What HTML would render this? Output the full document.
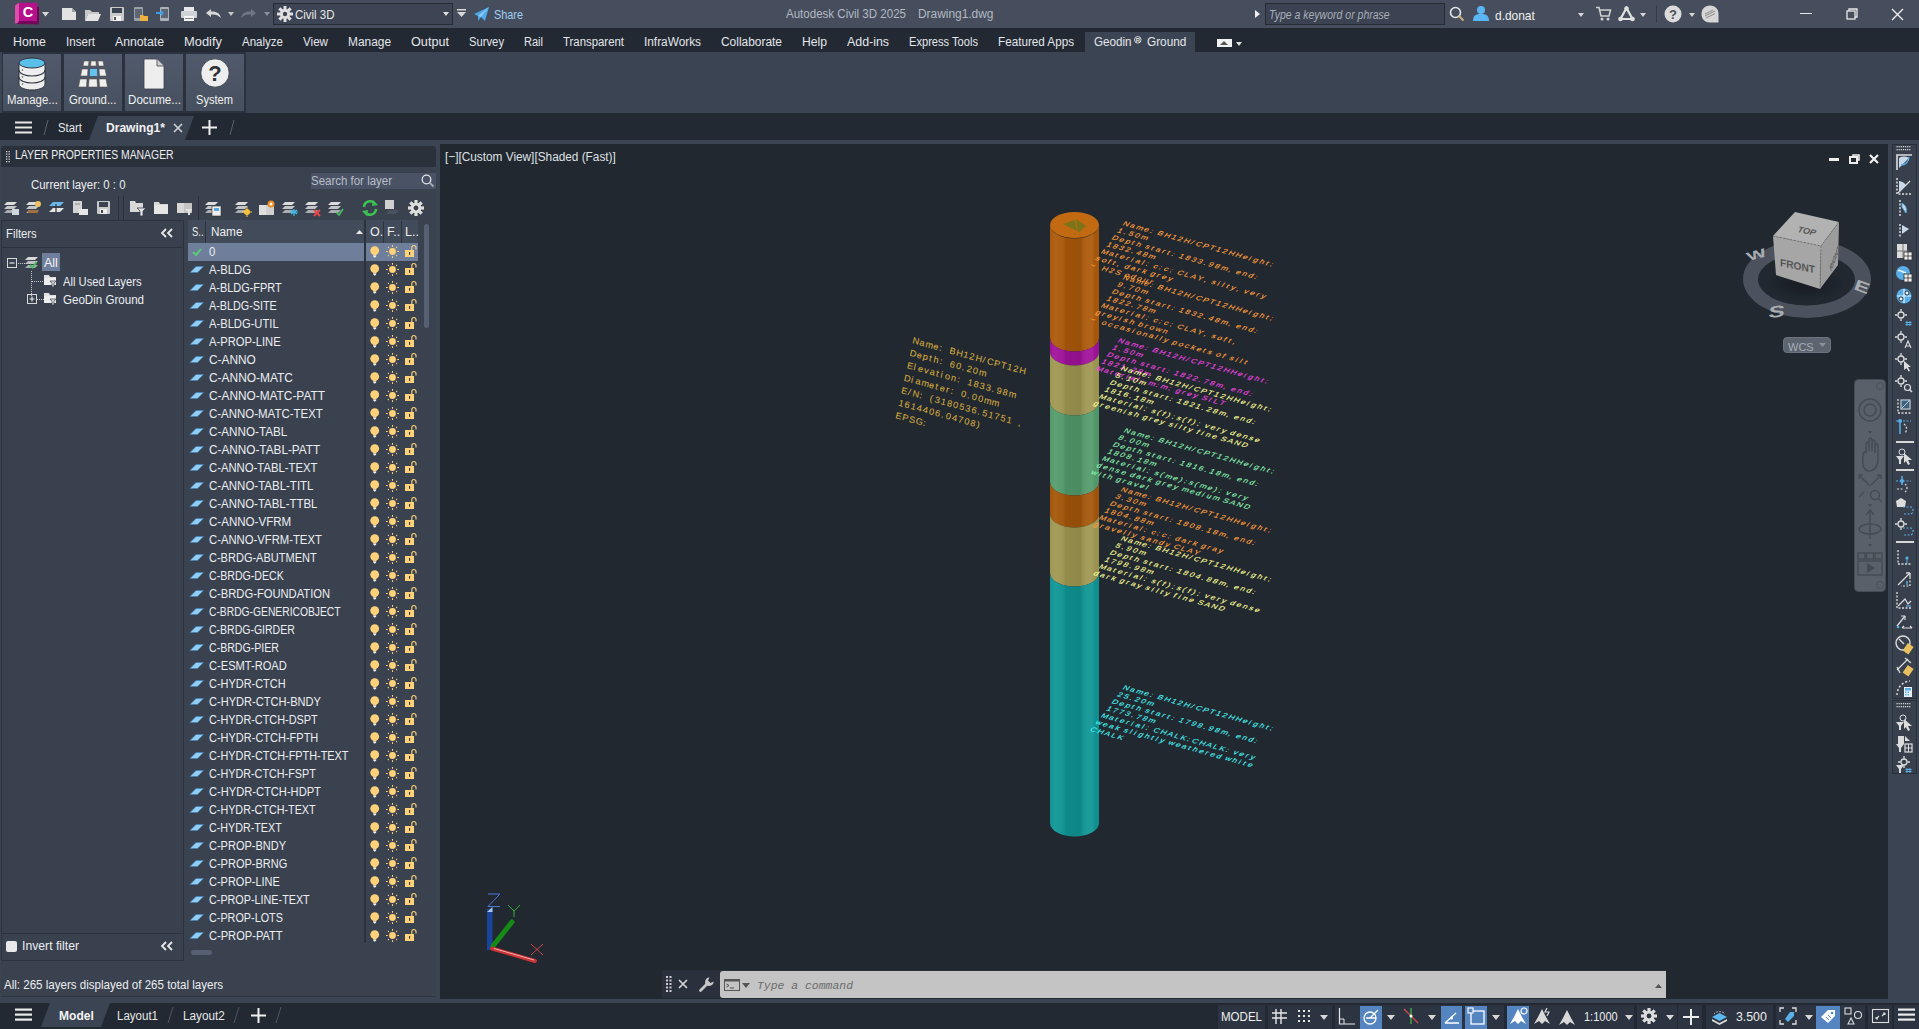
<!DOCTYPE html>
<html><head><meta charset="utf-8"><title>Autodesk Civil 3D 2025</title><style>
*{margin:0;padding:0;box-sizing:border-box}
html,body{width:1919px;height:1029px;overflow:hidden}
body{position:relative;background:#3b4453;font-family:"Liberation Sans",sans-serif;font-size:12px;color:#e8e8e8}
.a{position:absolute}
.t{position:absolute;white-space:nowrap}
svg{overflow:visible}
</style></head><body>
<div class="a" style="left:0px;top:0px;width:1919px;height:28px;background:#464e5d;"></div>
<svg class="a" style="left:14px;top:2px;" width="26" height="24" viewBox="0 0 26 24">
      <polygon points="1,3.5 5,0.7 5,21 1,21.5" fill="#e24aac"/>
      <rect x="5" y="0.7" width="18" height="18.3" fill="#b5118a"/>
      <polygon points="23,4.8 25,4.8 25,22.5 23,19" fill="#70064f"/>
      <polygon points="3,22 5,19 23,19 25,22.5 25,22.5" fill="#74075a"/>
      <text x="14" y="15.2" font-family="Liberation Sans" font-weight="bold" font-size="14.5" fill="#fff" text-anchor="middle">C</text>
    </svg>
<svg class="a" style="left:42px;top:12px;" width="7" height="4.5" viewBox="0 0 7 4.5"><polygon points="0,0 7,0 3.5,4.5" fill="#d8d8d8"/></svg>
<svg class="a" style="left:61px;top:7px;" width="16" height="14" viewBox="0 0 16 14"><polygon points="1,1 11,1 15,5 15,13 1,13" fill="#e2e2e2"/><polygon points="11,1 15,5 11,5" fill="#9aa0a8"/></svg>
<svg class="a" style="left:84px;top:8px;" width="18" height="14" viewBox="0 0 18 14"><polygon points="1,2 6,2 8,4 15,4 15,6 4,6 1,13" fill="#c8c8c8"/><polygon points="4,6 17,6 14,13 1,13" fill="#e4e4e4"/></svg>
<svg class="a" style="left:109px;top:6px;" width="16" height="16" viewBox="0 0 16 16"><rect x="1" y="1" width="14" height="14" rx="1" fill="#c9c9c9"/><rect x="3" y="2" width="10" height="5" fill="#3b4453"/><rect x="4" y="10" width="8" height="5" fill="#f4f4f4"/><rect x="5" y="11" width="2" height="3" fill="#555"/></svg>
<svg class="a" style="left:133px;top:6px;" width="16" height="16" viewBox="0 0 16 16"><rect x="1" y="1" width="9" height="14" rx="1" fill="#9aa0a8"/><rect x="2" y="3" width="7" height="9" fill="#5d6573"/><polygon points="7,9 10,9 11,10 15,10 15,15 7,15" fill="#f0b040"/></svg>
<svg class="a" style="left:156px;top:6px;" width="14" height="16" viewBox="0 0 14 16"><rect x="4" y="1" width="9" height="14" rx="1" fill="#aab0b8"/><rect x="5" y="3" width="7" height="9" fill="#5d6573"/><polygon points="0,6 5,6 5,4 8,7 5,10 5,8 0,8" fill="#39a0e8"/></svg>
<svg class="a" style="left:180px;top:6px;" width="18" height="16" viewBox="0 0 18 16"><rect x="4" y="1" width="10" height="4" fill="#e8e8e8"/><rect x="1" y="5" width="16" height="7" rx="1" fill="#d0d4d8"/><rect x="4" y="10" width="10" height="5" fill="#f4f4f4"/><rect x="5" y="12" width="8" height="1" fill="#888"/></svg>
<svg class="a" style="left:205px;top:8px;" width="17" height="11" viewBox="0 0 17 11"><path d="M6,1 L1,5 L6,9 L6,6.5 C10,6 13,7 16,10 C15,5 11,3 6,3.5 Z" fill="#d8d8d8"/></svg>
<svg class="a" style="left:228px;top:12px;" width="6" height="4" viewBox="0 0 6 4"><polygon points="0,0 6,0 3,4" fill="#c8c8c8"/></svg>
<svg class="a" style="left:241px;top:8px;" width="16" height="11" viewBox="0 0 16 11"><path d="M10,1 L15,5 L10,9 L10,6.5 C6,6 3,7 0,10 C1,5 5,3 10,3.5 Z" fill="#6e7683"/></svg>
<svg class="a" style="left:264px;top:12px;" width="6" height="4" viewBox="0 0 6 4"><polygon points="0,0 6,0 3,4" fill="#8a919c"/></svg>
<div class="a" style="left:273px;top:3px;width:180px;height:22px;background:#3d4554;border:1px solid #262c36;"></div>
<svg class="a" style="left:277px;top:6px;" width="16" height="16" viewBox="0 0 16 16"><g fill="#e0e0e0"><circle cx="8" cy="8" r="5"/>
      <rect x="6.5" y="0" width="3" height="16"/><rect x="0" y="6.5" width="16" height="3"/>
      <rect x="6.5" y="0" width="3" height="16" transform="rotate(45 8 8)"/><rect x="6.5" y="0" width="3" height="16" transform="rotate(-45 8 8)"/></g>
      <circle cx="8" cy="8" r="2.2" fill="#3d4554"/></svg>
<div class="t" style="left:295.00px;top:8.23px;font-size:13px;line-height:14.52px;color:#e8e8e8;transform:scaleX(0.8820);transform-origin:0 0;">Civil 3D</div>
<svg class="a" style="left:443px;top:12px;" width="6" height="4" viewBox="0 0 6 4"><polygon points="0,0 6,0 3,4" fill="#e0e0e0"/></svg>
<svg class="a" style="left:457px;top:9px;" width="9" height="9" viewBox="0 0 9 9"><rect x="0" y="0" width="9" height="1.5" fill="#d8d8d8"/><polygon points="0,3 9,3 4.5,8" fill="#d8d8d8"/></svg>
<svg class="a" style="left:474px;top:7px;" width="16" height="15" viewBox="0 0 16 15"><polygon points="0,7 15,0 11,14 7,10 4,14 4,9" fill="#4fa9ea"/><polygon points="4,9 15,0 7,10" fill="#8ccaf4"/></svg>
<div class="t" style="left:494.00px;top:8.69px;font-size:12.5px;line-height:13.96px;color:#9fcff2;transform:scaleX(0.8695);transform-origin:0 0;">Share</div>
<div class="t" style="left:786.00px;top:8.19px;font-size:12.5px;line-height:13.96px;color:#b3b9c2;transform:scaleX(0.9236);transform-origin:0 0;">Autodesk Civil 3D 2025</div>
<div class="t" style="left:918.00px;top:8.19px;font-size:12.5px;line-height:13.96px;color:#b3b9c2;transform:scaleX(0.9520);transform-origin:0 0;">Drawing1.dwg</div>
<svg class="a" style="left:1255px;top:10px;" width="5" height="8" viewBox="0 0 5 8"><polygon points="0,0 5,4 0,8" fill="#f0f0f0"/></svg>
<div class="a" style="left:1265px;top:3px;width:180px;height:22px;background:#3b4352;border:1px solid #262c36;"></div>
<div class="t" style="left:1268.80px;top:8.64px;font-size:12px;line-height:13.40px;color:#a7aeb9;font-style:italic;transform:scaleX(0.8757);transform-origin:0 0;">Type a keyword or phrase</div>
<svg class="a" style="left:1449px;top:6px;" width="16" height="16" viewBox="0 0 16 16"><circle cx="6.5" cy="6.5" r="5" fill="none" stroke="#e6e6e6" stroke-width="1.6"/><line x1="10" y1="10" x2="14.5" y2="14.5" stroke="#c9b07a" stroke-width="2"/></svg>
<svg class="a" style="left:1472px;top:5px;" width="18" height="16" viewBox="0 0 18 16"><circle cx="9" cy="5" r="4" fill="#5ab6f2"/><path d="M1,16 C1,10 4,9 9,9 C14,9 17,10 17,16 Z" fill="#5ab6f2"/></svg>
<div class="t" style="left:1494.60px;top:8.73px;font-size:13px;line-height:14.52px;color:#f0f0f0;transform:scaleX(0.9177);transform-origin:0 0;">d.donat</div>
<svg class="a" style="left:1578px;top:13px;" width="6" height="4" viewBox="0 0 6 4"><polygon points="0,0 6,0 3,4" fill="#d8d8d8"/></svg>
<svg class="a" style="left:1596px;top:6px;" width="15" height="15" viewBox="0 0 15 15"><path d="M0,1.5 L3,1.5 L5,10 L13,10 L14.5,4 L4,4" fill="none" stroke="#d0d0d0" stroke-width="1.5"/><circle cx="6" cy="13" r="1.5" fill="#d0d0d0"/><circle cx="12" cy="13" r="1.5" fill="#d0d0d0"/></svg>
<svg class="a" style="left:1618px;top:6px;" width="17" height="16" viewBox="0 0 17 16"><path d="M8.5,2 L2.5,13 L14.5,13 Z" fill="none" stroke="#e0e0e0" stroke-width="2.2"/><circle cx="8.5" cy="2.5" r="2.3" fill="#e0e0e0"/><circle cx="2.5" cy="13" r="2.3" fill="#e0e0e0"/><circle cx="14.5" cy="13" r="2.3" fill="#e0e0e0"/></svg>
<svg class="a" style="left:1640px;top:13px;" width="6" height="4" viewBox="0 0 6 4"><polygon points="0,0 6,0 3,4" fill="#d8d8d8"/></svg>
<div class="a" style="left:1656px;top:5px;width:1px;height:18px;background:#353c48;"></div>
<svg class="a" style="left:1664px;top:5px;" width="18" height="18" viewBox="0 0 18 18"><circle cx="9" cy="9" r="8.5" fill="#dcdcdc"/><text x="9" y="14" font-family="Liberation Sans" font-weight="bold" font-size="13" fill="#4a4f57" text-anchor="middle">?</text></svg>
<svg class="a" style="left:1689px;top:13px;" width="6" height="4" viewBox="0 0 6 4"><polygon points="0,0 6,0 3,4" fill="#d8d8d8"/></svg>
<svg class="a" style="left:1701px;top:5px;" width="18" height="18" viewBox="0 0 18 18"><path d="M9,0.5 C14,0.5 17.5,4 17.5,9 L17.5,17.5 L9,17.5 C4,17.5 0.5,14 0.5,9 C0.5,4 4,0.5 9,0.5 Z" fill="#d6d6d6"/><g stroke="#8a8a8a" stroke-width="1"><line x1="4" y1="9" x2="12" y2="5"/><line x1="4" y1="11" x2="14" y2="6"/><line x1="5" y1="13" x2="14" y2="8.5"/></g></svg>
<div class="a" style="left:1800px;top:13px;width:12px;height:1px;background:#e8e8e8;"></div>
<svg class="a" style="left:1846px;top:8px;" width="12" height="12" viewBox="0 0 12 12"><rect x="1" y="3" width="8" height="8" fill="none" stroke="#e8e8e8" stroke-width="1.3"/><path d="M3,3 L3,1 L11,1 L11,9 L9,9" fill="none" stroke="#e8e8e8" stroke-width="1.3"/></svg>
<svg class="a" style="left:1891px;top:8px;" width="13" height="13" viewBox="0 0 13 13"><path d="M1,1 L12,12 M12,1 L1,12" stroke="#ededed" stroke-width="1.4"/></svg>
<div class="a" style="left:0px;top:28px;width:1919px;height:24px;background:#222933;"></div>
<div class="a" style="left:1085px;top:32px;width:110px;height:20px;background:#3b4453;"></div>
<div class="t" style="left:13.00px;top:35.69px;font-size:12.5px;line-height:13.96px;color:#e4e6ea;transform:scaleX(0.9897);transform-origin:0 0;">Home</div>
<div class="t" style="left:66.00px;top:35.69px;font-size:12.5px;line-height:13.96px;color:#e4e6ea;transform:scaleX(0.9277);transform-origin:0 0;">Insert</div>
<div class="t" style="left:115.00px;top:35.69px;font-size:12.5px;line-height:13.96px;color:#e4e6ea;transform:scaleX(0.9792);transform-origin:0 0;">Annotate</div>
<div class="t" style="left:184.00px;top:35.69px;font-size:12.5px;line-height:13.96px;color:#e4e6ea;transform:scaleX(1.0322);transform-origin:0 0;">Modify</div>
<div class="t" style="left:242.00px;top:35.69px;font-size:12.5px;line-height:13.96px;color:#e4e6ea;transform:scaleX(0.9220);transform-origin:0 0;">Analyze</div>
<div class="t" style="left:303.00px;top:35.69px;font-size:12.5px;line-height:13.96px;color:#e4e6ea;transform:scaleX(0.9305);transform-origin:0 0;">View</div>
<div class="t" style="left:348.00px;top:35.69px;font-size:12.5px;line-height:13.96px;color:#e4e6ea;transform:scaleX(0.9520);transform-origin:0 0;">Manage</div>
<div class="t" style="left:411.00px;top:35.69px;font-size:12.5px;line-height:13.96px;color:#e4e6ea;transform:scaleX(1.0128);transform-origin:0 0;">Output</div>
<div class="t" style="left:469.00px;top:35.69px;font-size:12.5px;line-height:13.96px;color:#e4e6ea;transform:scaleX(0.8997);transform-origin:0 0;">Survey</div>
<div class="t" style="left:524.00px;top:35.69px;font-size:12.5px;line-height:13.96px;color:#e4e6ea;transform:scaleX(0.8824);transform-origin:0 0;">Rail</div>
<div class="t" style="left:563.00px;top:35.69px;font-size:12.5px;line-height:13.96px;color:#e4e6ea;transform:scaleX(0.9115);transform-origin:0 0;">Transparent</div>
<div class="t" style="left:644.00px;top:35.69px;font-size:12.5px;line-height:13.96px;color:#e4e6ea;transform:scaleX(0.9469);transform-origin:0 0;">InfraWorks</div>
<div class="t" style="left:721.00px;top:35.69px;font-size:12.5px;line-height:13.96px;color:#e4e6ea;transform:scaleX(0.9543);transform-origin:0 0;">Collaborate</div>
<div class="t" style="left:802.00px;top:35.69px;font-size:12.5px;line-height:13.96px;color:#e4e6ea;transform:scaleX(0.9725);transform-origin:0 0;">Help</div>
<div class="t" style="left:847.00px;top:35.69px;font-size:12.5px;line-height:13.96px;color:#e4e6ea;transform:scaleX(0.9910);transform-origin:0 0;">Add-ins</div>
<div class="t" style="left:909.00px;top:35.69px;font-size:12.5px;line-height:13.96px;color:#e4e6ea;transform:scaleX(0.8894);transform-origin:0 0;">Express Tools</div>
<div class="t" style="left:998.00px;top:35.69px;font-size:12.5px;line-height:13.96px;color:#e4e6ea;transform:scaleX(0.9348);transform-origin:0 0;">Featured Apps</div>
<div class="t" style="left:1094.00px;top:35.69px;font-size:12.5px;line-height:13.96px;color:#e4e6ea;transform:scaleX(0.9329);transform-origin:0 0;">Geodin</div>
<div class="t" style="left:1146.60px;top:35.69px;font-size:12.5px;line-height:13.96px;color:#e4e6ea;transform:scaleX(0.9451);transform-origin:0 0;">Ground</div>
<svg class="a" style="left:1134px;top:36px;" width="8" height="8" viewBox="0 0 8 8"><circle cx="3.8" cy="3.8" r="3.3" fill="none" stroke="#e4e6ea" stroke-width="0.9"/><text x="3.8" y="6" font-family="Liberation Sans" font-size="6" font-weight="bold" fill="#e4e6ea" text-anchor="middle">R</text></svg>
<div class="a" style="left:1217px;top:39px;width:15px;height:8px;background:#f2f2f2;"></div>
<svg class="a" style="left:1220px;top:41px;" width="8" height="4" viewBox="0 0 8 4"><polygon points="0,4 4,0 8,4" fill="#555"/></svg>
<svg class="a" style="left:1236px;top:42px;" width="6" height="4" viewBox="0 0 6 4"><polygon points="0,0 6,0 3,4" fill="#e0e0e0"/></svg>
<div class="a" style="left:0px;top:52px;width:1919px;height:61px;background:#3b4453;"></div>
<div class="a" style="left:2px;top:52px;width:244px;height:61px;background:#2b323d;"></div>
<div class="a" style="left:3px;top:54px;width:58px;height:57px;background:linear-gradient(#505a6c,#46505f);"></div>
<div class="t" style="left:6.80px;top:94.19px;font-size:12.5px;line-height:13.96px;color:#f0f0f0;transform:scaleX(0.9139);transform-origin:0 0;">Manage...</div>
<div class="a" style="left:64px;top:54px;width:58px;height:57px;background:linear-gradient(#505a6c,#46505f);"></div>
<div class="t" style="left:68.80px;top:94.19px;font-size:12.5px;line-height:13.96px;color:#f0f0f0;transform:scaleX(0.9097);transform-origin:0 0;">Ground...</div>
<div class="a" style="left:125px;top:54px;width:58px;height:57px;background:linear-gradient(#505a6c,#46505f);"></div>
<div class="t" style="left:127.50px;top:94.19px;font-size:12.5px;line-height:13.96px;color:#f0f0f0;transform:scaleX(0.9305);transform-origin:0 0;">Docume...</div>
<div class="a" style="left:186px;top:54px;width:58px;height:57px;background:linear-gradient(#505a6c,#46505f);"></div>
<div class="t" style="left:196.00px;top:94.19px;font-size:12.5px;line-height:13.96px;color:#f0f0f0;transform:scaleX(0.8878);transform-origin:0 0;">System</div>
<svg class="a" style="left:18px;top:57px;" width="28" height="34" viewBox="0 0 28 34">
      <path d="M1,6 L1,27 C1,31 8,33 14,33 C20,33 27,31 27,27 L27,6 Z" fill="#eeeeee" stroke="#2e3540" stroke-width="1"/>
      <path d="M1,13 C1,17 8,19 14,19 C20,19 27,17 27,13" fill="none" stroke="#2e3540" stroke-width="1.2"/>
      <path d="M1,20 C1,24 8,26 14,26 C20,26 27,24 27,20" fill="none" stroke="#2e3540" stroke-width="1.2"/>
      <ellipse cx="14" cy="6" rx="13" ry="5" fill="#5bbfea" stroke="#2e3540" stroke-width="1"/>
      <circle cx="4.5" cy="13" r="0.8" fill="#555"/><circle cx="4.5" cy="20" r="0.8" fill="#555"/><circle cx="4.5" cy="27" r="0.8" fill="#555"/></svg>
<svg class="a" style="left:78px;top:60px;" width="30" height="28" viewBox="0 0 30 28"><g fill="#efefef" stroke="#5a5048" stroke-width="0.6">
      <polygon points="6,1 11,1 10.5,6 5,6"/><polygon points="13,1 18,1 18.3,6 12.5,6"/><polygon points="20,1 25,1 26,6 20.5,6"/>
      <polygon points="4,9 10,9 9.5,16 2.5,16"/><polygon points="21,9 27,9 28.5,16 21.5,16"/>
      <polygon points="2,19 9,19 8.5,27 0.5,27"/><polygon points="11,19 19,19 19.5,27 10.5,27"/><polygon points="21,19 28,19 29.5,27 21.5,27"/></g>
      <polygon points="12,9 19,9 19.2,16 11.8,16" fill="#64c2ee"/></svg>
<svg class="a" style="left:143px;top:58px;" width="22" height="32" viewBox="0 0 22 32"><path d="M1,2 Q1,1 2,1 L14,1 L21,8 L21,30 Q21,31 20,31 L2,31 Q1,31 1,30 Z" fill="#eeeeee" stroke="#3a3f48" stroke-width="0.8"/><path d="M14,1 L14,8 L21,8" fill="#cfcfcf" stroke="#3a3f48" stroke-width="0.8"/></svg>
<svg class="a" style="left:200px;top:58px;" width="30" height="30" viewBox="0 0 30 30"><circle cx="15" cy="15" r="14.2" fill="#eeeeee" stroke="#2e3540" stroke-width="0.8"/><text x="15" y="23" font-family="Liberation Sans" font-weight="bold" font-size="22" fill="#2e3138" text-anchor="middle">?</text></svg>
<div class="a" style="left:0px;top:113px;width:1919px;height:27px;background:#222933;"></div>
<svg class="a" style="left:15px;top:121px;" width="17" height="13" viewBox="0 0 17 13"><rect x="0" y="0.5" width="17" height="2" fill="#e8e8e8"/><rect x="0" y="5.5" width="17" height="2" fill="#e8e8e8"/><rect x="0" y="10.5" width="17" height="2" fill="#e8e8e8"/></svg>
<svg class="a" style="left:43px;top:120px;" width="6" height="15" viewBox="0 0 6 15"><line x1="5" y1="0" x2="1" y2="15" stroke="#59616e" stroke-width="1"/></svg>
<div class="t" style="left:58.00px;top:122.19px;font-size:12.5px;line-height:13.96px;color:#e4e6ea;transform:scaleX(0.9092);transform-origin:0 0;">Start</div>
<svg class="a" style="left:89px;top:116px;" width="106" height="24" viewBox="0 0 106 24"><polygon points="9,0 105,0 96,24 0,24" fill="#3b4453"/></svg>
<div class="t" style="left:106.00px;top:122.19px;font-size:12.5px;line-height:13.96px;color:#f2f2f2;font-weight:bold;transform:scaleX(0.9652);transform-origin:0 0;">Drawing1*</div>
<svg class="a" style="left:173px;top:123px;" width="10" height="10" viewBox="0 0 10 10"><path d="M1,1 L9,9 M9,1 L1,9" stroke="#cfd3d8" stroke-width="1.6"/></svg>
<svg class="a" style="left:202px;top:120px;" width="15" height="15" viewBox="0 0 15 15"><rect x="6.5" y="0" width="2" height="15" fill="#efefef"/><rect x="0" y="6.5" width="15" height="2" fill="#efefef"/></svg>
<svg class="a" style="left:229px;top:120px;" width="6" height="15" viewBox="0 0 6 15"><line x1="5" y1="0" x2="1" y2="15" stroke="#59616e" stroke-width="1"/></svg>
<div class="a" style="left:1px;top:146px;width:435px;height:21px;background:#2a313b;border-radius:3px 3px 0 0;"></div>
<svg class="a" style="left:6px;top:151px;" width="4" height="11" viewBox="0 0 4 11"><rect x="0" y="0" width="1.3" height="1.3" fill="#cfd3d8"/><rect x="0" y="2.5" width="1.3" height="1.3" fill="#cfd3d8"/><rect x="0" y="5" width="1.3" height="1.3" fill="#cfd3d8"/><rect x="0" y="7.5" width="1.3" height="1.3" fill="#cfd3d8"/><rect x="0" y="10" width="1.3" height="1.3" fill="#cfd3d8"/><rect x="2.5" y="0" width="1.3" height="1.3" fill="#cfd3d8"/><rect x="2.5" y="2.5" width="1.3" height="1.3" fill="#cfd3d8"/><rect x="2.5" y="5" width="1.3" height="1.3" fill="#cfd3d8"/><rect x="2.5" y="7.5" width="1.3" height="1.3" fill="#cfd3d8"/><rect x="2.5" y="10" width="1.3" height="1.3" fill="#cfd3d8"/></svg>
<div class="t" style="left:15.20px;top:149.14px;font-size:12px;line-height:13.40px;color:#eceef0;transform:scaleX(0.8670);transform-origin:0 0;">LAYER PROPERTIES MANAGER</div>
<div class="a" style="left:1px;top:167px;width:435px;height:830px;background:#3a4250;border-radius:0 0 3px 3px;"></div>
<div class="t" style="left:30.50px;top:179.14px;font-size:12px;line-height:13.40px;color:#eceef0;transform:scaleX(0.9510);transform-origin:0 0;">Current layer: 0 : 0</div>
<div class="a" style="left:311px;top:173px;width:125px;height:16px;background:#4a5365;"></div>
<div class="t" style="left:311.00px;top:175.14px;font-size:12px;line-height:13.40px;color:#b8bec7;transform:scaleX(0.9563);transform-origin:0 0;">Search for layer</div>
<svg class="a" style="left:421px;top:174px;" width="14" height="14" viewBox="0 0 14 14"><circle cx="5.5" cy="5.5" r="4.3" fill="none" stroke="#e4e4e4" stroke-width="1.3"/><line x1="8.6" y1="8.6" x2="12.5" y2="12.5" stroke="#a7adb5" stroke-width="1.8"/></svg>
<svg class="a" style="left:4px;top:200px;" width="16" height="16" viewBox="0 0 16 16"><g fill="#dcdcdc"><polygon points="3,2 13,2 10,5 0,5"/><polygon points="3,6 13,6 10,9 0,9" opacity="0.85"/><polygon points="3,10 13,10 10,13 0,13" opacity="0.7"/></g><rect x="8" y="9" width="7" height="6" fill="#cfd6de"/></svg>
<svg class="a" style="left:26px;top:200px;" width="17" height="16" viewBox="0 0 17 16"><g fill="#dcdcdc"><polygon points="3,2 13,2 10,5 0,5"/><polygon points="3,6 13,6 10,9 0,9" opacity="0.85"/><polygon points="3,10 13,10 10,13 0,13" opacity="0.7"/></g><circle cx="12" cy="4" r="3" fill="#f0c060"/><rect x="2" y="10" width="10" height="3" fill="#a07040"/></svg>
<svg class="a" style="left:49px;top:200px;" width="16" height="16" viewBox="0 0 16 16"><polygon points="4,2 15,2 11,6 0,6" fill="#6ab8e8"/><polygon points="4,8 15,8 11,12 0,12" fill="#e4e4e4"/><path d="M7,4 L7,12" stroke="#333" stroke-width="1.2"/></svg>
<svg class="a" style="left:72px;top:200px;" width="16" height="16" viewBox="0 0 16 16"><rect x="1" y="1" width="9" height="12" fill="#d4d4d4"/><rect x="7" y="9" width="9" height="6" fill="#e8e8e8"/><line x1="3" y1="4" x2="8" y2="4" stroke="#888"/></svg>
<svg class="a" style="left:96px;top:200px;" width="15" height="15" viewBox="0 0 15 15"><rect x="1" y="1" width="13" height="13" rx="1" fill="#c8c8c8"/><rect x="3" y="2" width="9" height="5" fill="#3a4250"/><rect x="4" y="9" width="7" height="5" fill="#eee"/><rect x="5" y="10" width="2" height="3" fill="#444"/></svg>
<div class="a" style="left:118px;top:196px;width:1px;height:24px;background:#2b323d;"></div>
<div class="a" style="left:123px;top:196px;width:1px;height:24px;background:#2b323d;"></div>
<svg class="a" style="left:130px;top:200px;" width="17" height="17" viewBox="0 0 17 17"><polygon points="0,1 5,1 6,3 13,3 13,12 0,12" fill="#d8d8d8"/><polygon points="7,8 16,8 13,11 13,16 10,16 10,11" fill="#e4e4e4" stroke="#3a4250" stroke-width="0.8"/></svg>
<svg class="a" style="left:154px;top:201px;" width="15" height="14" viewBox="0 0 15 14"><polygon points="0,1 5,1 6,3 14,3 14,13 0,13" fill="#d8d8d8"/><rect x="0" y="4" width="14" height="9" fill="#e6e6e6"/></svg>
<svg class="a" style="left:177px;top:201px;" width="16" height="15" viewBox="0 0 16 15"><rect x="0" y="2" width="7" height="10" fill="#d8d8d8"/><rect x="7" y="2" width="8" height="10" fill="#c4c4c4"/><polygon points="8,8 15,8 13,11 13,14 11,14 11,11" fill="#e4e4e4"/></svg>
<div class="a" style="left:198px;top:196px;width:1px;height:24px;background:#2b323d;"></div>
<svg class="a" style="left:205px;top:200px;" width="17" height="16" viewBox="0 0 17 16"><g fill="#dcdcdc"><polygon points="3,2 13,2 10,5 0,5"/><polygon points="3,6 13,6 10,9 0,9" opacity="0.85"/><polygon points="3,10 13,10 10,13 0,13" opacity="0.7"/></g><rect x="7" y="6" width="9" height="10" fill="#eee" stroke="#333" stroke-width="0.6"/><rect x="9" y="8" width="5" height="3" fill="#5aa8e0"/></svg>
<svg class="a" style="left:235px;top:200px;" width="17" height="17" viewBox="0 0 17 17"><g fill="#dcdcdc"><polygon points="3,2 13,2 10,5 0,5"/><polygon points="3,6 13,6 10,9 0,9" opacity="0.85"/><polygon points="3,10 13,10 10,13 0,13" opacity="0.7"/></g><circle cx="12" cy="12" r="3" fill="#f5c040"/><path d="M12,7 L12,17 M7,12 L17,12" stroke="#f5c040" stroke-width="1"/></svg>
<svg class="a" style="left:259px;top:200px;" width="16" height="16" viewBox="0 0 16 16"><rect x="0" y="5" width="7" height="10" fill="#dedede"/><rect x="7" y="5" width="8" height="10" fill="#d0d0d0"/><circle cx="12" cy="4" r="3.5" fill="#f08a20"/><circle cx="12" cy="4" r="1.5" fill="#fff"/></svg>
<svg class="a" style="left:282px;top:200px;" width="17" height="17" viewBox="0 0 17 17"><g fill="#dcdcdc"><polygon points="3,2 13,2 10,5 0,5"/><polygon points="3,6 13,6 10,9 0,9" opacity="0.85"/><polygon points="3,10 13,10 10,13 0,13" opacity="0.7"/></g><path d="M8,12 L16,12 M12,9 L12,16 M9,10 L15,14 M15,10 L9,14" stroke="#40b8e0" stroke-width="1.2"/></svg>
<svg class="a" style="left:305px;top:200px;" width="17" height="17" viewBox="0 0 17 17"><g fill="#dcdcdc"><polygon points="3,2 13,2 10,5 0,5"/><polygon points="3,6 13,6 10,9 0,9" opacity="0.85"/><polygon points="3,10 13,10 10,13 0,13" opacity="0.7"/></g><path d="M9,10 L15,16 M15,10 L9,16" stroke="#e84848" stroke-width="2"/></svg>
<svg class="a" style="left:328px;top:200px;" width="16" height="16" viewBox="0 0 16 16"><g fill="#dcdcdc"><polygon points="3,2 13,2 10,5 0,5"/><polygon points="3,6 13,6 10,9 0,9" opacity="0.85"/><polygon points="3,10 13,10 10,13 0,13" opacity="0.7"/></g><path d="M8,12 L11,15 L15,9" fill="none" stroke="#4cc060" stroke-width="1.6"/></svg>
<svg class="a" style="left:361px;top:200px;" width="18" height="16" viewBox="0 0 18 16"><path d="M3,7 A6,6 0 0 1 14,4" fill="none" stroke="#3cc050" stroke-width="2.6"/><polygon points="12,0 17,5 11,6" fill="#3cc050"/><path d="M15,9 A6,6 0 0 1 4,12" fill="none" stroke="#3cc050" stroke-width="2.6"/><polygon points="6,16 1,11 7,10" fill="#3cc050"/></svg>
<svg class="a" style="left:385px;top:200px;" width="15" height="16" viewBox="0 0 15 16"><rect x="0" y="0" width="9" height="9" fill="#d0d0d0"/><polygon points="4,10 14,10 11,14 1,14" fill="#4a5260"/></svg>
<svg class="a" style="left:408px;top:200px;" width="16" height="16" viewBox="0 0 16 16"><g fill="#dedede"><circle cx="8" cy="8" r="5.2"/><rect x="6.4" y="0" width="3.2" height="16"/><rect x="0" y="6.4" width="16" height="3.2"/><rect x="6.4" y="0" width="3.2" height="16" transform="rotate(45 8 8)"/><rect x="6.4" y="0" width="3.2" height="16" transform="rotate(-45 8 8)"/></g><circle cx="8" cy="8" r="2.4" fill="#3a4250"/></svg>
<div class="a" style="left:1px;top:220px;width:183px;height:741px;background:#39414f;border:1px solid #2c333e;"></div>
<div class="a" style="left:2px;top:247px;width:181px;height:1px;background:#2c333e;"></div>
<div class="t" style="left:6.40px;top:227.69px;font-size:12.5px;line-height:13.96px;color:#eceef0;transform:scaleX(0.9023);transform-origin:0 0;">Filters</div>
<svg class="a" style="left:160px;top:228px;" width="14" height="10" viewBox="0 0 14 10"><path d="M6,1 L2,5 L6,9 M12,1 L8,5 L12,9" fill="none" stroke="#e8e8e8" stroke-width="1.8"/></svg>
<svg class="a" style="left:7px;top:258px;" width="11" height="11" viewBox="0 0 11 11"><rect x="0.5" y="0.5" width="9" height="9" fill="none" stroke="#d8d8d8"/><line x1="2.5" y1="5" x2="7.5" y2="5" stroke="#e8e8e8" stroke-width="1.2"/></svg>
<svg class="a" style="left:18px;top:263px;" width="8" height="1" viewBox="0 0 8 1"><line x1="0" y1="0.5" x2="8" y2="0.5" stroke="#c8c8c8" stroke-dasharray="1,1"/></svg>
<svg class="a" style="left:25px;top:255px;" width="12" height="14" viewBox="0 0 12 14"><g fill="#d8d8d8"><polygon points="3,2 13,2 10,5 0,5"/><polygon points="3,6 13,6 10,9 0,9" opacity="0.85"/><polygon points="3,10 13,10 10,13 0,13" opacity="0.7"/></g><path d="M5,10 L7.5,12.5 L11.5,7" fill="none" stroke="#46c060" stroke-width="1.8"/></svg>
<div class="a" style="left:42px;top:253px;width:18px;height:18px;background:#6f7f9b;"></div>
<div class="t" style="left:44.00px;top:256.69px;font-size:12.5px;line-height:13.96px;color:#f4f4f4;">All</div>
<svg class="a" style="left:31px;top:271px;" width="1" height="25" viewBox="0 0 1 25"><line x1="0.5" y1="0" x2="0.5" y2="25" stroke="#c8c8c8" stroke-dasharray="1,1"/></svg>
<svg class="a" style="left:32px;top:281px;" width="11" height="1" viewBox="0 0 11 1"><line x1="0" y1="0.5" x2="11" y2="0.5" stroke="#c8c8c8" stroke-dasharray="1,1"/></svg>
<svg class="a" style="left:44px;top:275px;" width="13" height="13" viewBox="0 0 13 13"><polygon points="0,0 5,0 6,2 12,2 12,10 0,10" fill="#e0e0e0"/><rect x="0" y="3" width="12" height="7" fill="#eeeeee"/><polygon points="6,6 12,6 10,8.5 10,12 8,12 8,8.5" fill="#d4d4d4" stroke="#3a4250" stroke-width="0.7"/></svg>
<div class="t" style="left:62.50px;top:275.69px;font-size:12.5px;line-height:13.96px;color:#eceef0;transform:scaleX(0.8968);transform-origin:0 0;">All Used Layers</div>
<svg class="a" style="left:27px;top:294px;" width="10" height="10" viewBox="0 0 10 10"><rect x="0.5" y="0.5" width="9" height="9" fill="none" stroke="#d8d8d8"/><path d="M2.5,5 L7.5,5 M5,2.5 L5,7.5" stroke="#e8e8e8" stroke-width="1.2"/></svg>
<svg class="a" style="left:37px;top:299px;" width="7" height="1" viewBox="0 0 7 1"><line x1="0" y1="0.5" x2="7" y2="0.5" stroke="#c8c8c8" stroke-dasharray="1,1"/></svg>
<svg class="a" style="left:44px;top:293px;" width="13" height="13" viewBox="0 0 13 13"><polygon points="0,0 5,0 6,2 12,2 12,10 0,10" fill="#e0e0e0"/><rect x="0" y="3" width="12" height="7" fill="#eeeeee"/><polygon points="6,6 12,6 10,8.5 10,12 8,12 8,8.5" fill="#d4d4d4" stroke="#3a4250" stroke-width="0.7"/></svg>
<div class="t" style="left:62.50px;top:293.69px;font-size:12.5px;line-height:13.96px;color:#eceef0;transform:scaleX(0.9253);transform-origin:0 0;">GeoDin Ground</div>
<div class="a" style="left:2px;top:933px;width:181px;height:1px;background:#2c333e;"></div>
<div class="a" style="left:6px;top:941px;width:11px;height:11px;background:#e8e8e8;border-radius:2px;"></div>
<div class="t" style="left:22.00px;top:940.19px;font-size:12.5px;line-height:13.96px;color:#eceef0;transform:scaleX(0.9769);transform-origin:0 0;">Invert filter</div>
<svg class="a" style="left:160px;top:941px;" width="14" height="10" viewBox="0 0 14 10"><path d="M6,1 L2,5 L6,9 M12,1 L8,5 L12,9" fill="none" stroke="#e8e8e8" stroke-width="1.8"/></svg>
<div class="a" style="left:188px;top:220px;width:176px;height:23px;background:#424b5a;"></div>
<div class="a" style="left:366px;top:220px;width:52px;height:23px;background:#424b5a;"></div>
<div class="a" style="left:205px;top:221px;width:1px;height:22px;background:#2c333e;"></div>
<div class="a" style="left:383px;top:221px;width:1px;height:22px;background:#2c333e;"></div>
<div class="a" style="left:401px;top:221px;width:1px;height:22px;background:#2c333e;"></div>
<div class="a" style="left:364px;top:220px;width:2px;height:723px;background:#2b323c;"></div>
<div class="t" style="left:192.00px;top:226.19px;font-size:12.5px;line-height:13.96px;color:#eceef0;transform:scaleX(0.7525);transform-origin:0 0;">S..</div>
<div class="t" style="left:210.60px;top:226.19px;font-size:12.5px;line-height:13.96px;color:#eceef0;transform:scaleX(0.9448);transform-origin:0 0;">Name</div>
<svg class="a" style="left:356px;top:230px;" width="7" height="4" viewBox="0 0 7 4"><polygon points="0,4 3.5,0 7,4" fill="#e8e8e8"/></svg>
<div class="t" style="left:370.00px;top:226.19px;font-size:12.5px;line-height:13.96px;color:#eceef0;">O.</div>
<div class="t" style="left:387.00px;top:226.19px;font-size:12.5px;line-height:13.96px;color:#eceef0;">F..</div>
<div class="t" style="left:405.00px;top:226.19px;font-size:12.5px;line-height:13.96px;color:#eceef0;">L..</div>
<div class="a" style="left:188px;top:243px;width:176px;height:18px;background:#6f7f9b;"></div>
<div class="a" style="left:366px;top:243px;width:52px;height:18px;background:#6f7f9b;"></div>
<div class="a" style="left:424px;top:224px;width:5px;height:104px;background:#566072;border-radius:3px;"></div>
<div class="a" style="left:191px;top:950px;width:21px;height:5px;background:#566072;border-radius:3px;"></div>
<svg class="a" style="left:192px;top:248px;" width="10" height="8" viewBox="0 0 10 8"><path d="M1,4 L4,7 L9,1" fill="none" stroke="#5cc87a" stroke-width="2"/></svg>
<div class="t" style="left:209.10px;top:246.14px;font-size:12px;line-height:13.40px;color:#eceef0;transform:scaleX(0.9441);transform-origin:0 0;">0</div>
<svg class="a" style="left:370px;top:246px;" width="10" height="12" viewBox="0 0 10 12"><circle cx="4.7" cy="4.6" r="4.4" fill="#ffd27a"/><rect x="3.2" y="8" width="3" height="1.5" fill="#ffd27a"/><path d="M3.2,9.6 L6.2,9.6 L6.2,10.6 L4.7,11.8 L3.2,10.6 Z" fill="#f4f4f4"/></svg>
<svg class="a" style="left:386px;top:245px;" width="13" height="13" viewBox="0 0 13 13"><circle cx="6.5" cy="6.5" r="3.4" fill="#ffd27a"/><g stroke="#ffd27a" stroke-width="1.1"><line x1="6.5" y1="0" x2="6.5" y2="1.8"/><line x1="6.5" y1="11.2" x2="6.5" y2="13"/><line x1="0" y1="6.5" x2="1.8" y2="6.5"/><line x1="11.2" y1="6.5" x2="13" y2="6.5"/><line x1="2" y1="2" x2="2.8" y2="2.8"/><line x1="10.2" y1="10.2" x2="11" y2="11"/><line x1="2" y1="11" x2="2.8" y2="10.2"/><line x1="10.2" y1="2.8" x2="11" y2="2"/></g></svg>
<svg class="a" style="left:405px;top:245px;" width="12" height="12" viewBox="0 0 12 12"><path d="M6.8,5 L6.8,2.6 A2.1,2.1 0 0 1 11,2.6 L11,4.5" fill="none" stroke="#ffd27a" stroke-width="1.1"/><rect x="0" y="5" width="9" height="7" fill="#ffd27a"/><rect x="4" y="7" width="1.1" height="2.8" fill="#333"/></svg>
<svg class="a" style="left:190px;top:266px;" width="14" height="7" viewBox="0 0 14 7"><polygon points="6,0.5 13.5,0.5 7.5,6.5 0,6.5" fill="#8fcdf5" stroke="#3d7fb5" stroke-width="0.6"/></svg>
<div class="t" style="left:209.10px;top:264.14px;font-size:12px;line-height:13.40px;color:#eceef0;transform:scaleX(0.9378);transform-origin:0 0;">A-BLDG</div>
<svg class="a" style="left:370px;top:264px;" width="10" height="12" viewBox="0 0 10 12"><circle cx="4.7" cy="4.6" r="4.4" fill="#ffd27a"/><rect x="3.2" y="8" width="3" height="1.5" fill="#ffd27a"/><path d="M3.2,9.6 L6.2,9.6 L6.2,10.6 L4.7,11.8 L3.2,10.6 Z" fill="#f4f4f4"/></svg>
<svg class="a" style="left:386px;top:263px;" width="13" height="13" viewBox="0 0 13 13"><circle cx="6.5" cy="6.5" r="3.4" fill="#ffd27a"/><g stroke="#ffd27a" stroke-width="1.1"><line x1="6.5" y1="0" x2="6.5" y2="1.8"/><line x1="6.5" y1="11.2" x2="6.5" y2="13"/><line x1="0" y1="6.5" x2="1.8" y2="6.5"/><line x1="11.2" y1="6.5" x2="13" y2="6.5"/><line x1="2" y1="2" x2="2.8" y2="2.8"/><line x1="10.2" y1="10.2" x2="11" y2="11"/><line x1="2" y1="11" x2="2.8" y2="10.2"/><line x1="10.2" y1="2.8" x2="11" y2="2"/></g></svg>
<svg class="a" style="left:405px;top:263px;" width="12" height="12" viewBox="0 0 12 12"><path d="M6.8,5 L6.8,2.6 A2.1,2.1 0 0 1 11,2.6 L11,4.5" fill="none" stroke="#ffd27a" stroke-width="1.1"/><rect x="0" y="5" width="9" height="7" fill="#ffd27a"/><rect x="4" y="7" width="1.1" height="2.8" fill="#333"/></svg>
<svg class="a" style="left:190px;top:284px;" width="14" height="7" viewBox="0 0 14 7"><polygon points="6,0.5 13.5,0.5 7.5,6.5 0,6.5" fill="#8fcdf5" stroke="#3d7fb5" stroke-width="0.6"/></svg>
<div class="t" style="left:209.10px;top:282.14px;font-size:12px;line-height:13.40px;color:#eceef0;transform:scaleX(0.9112);transform-origin:0 0;">A-BLDG-FPRT</div>
<svg class="a" style="left:370px;top:282px;" width="10" height="12" viewBox="0 0 10 12"><circle cx="4.7" cy="4.6" r="4.4" fill="#ffd27a"/><rect x="3.2" y="8" width="3" height="1.5" fill="#ffd27a"/><path d="M3.2,9.6 L6.2,9.6 L6.2,10.6 L4.7,11.8 L3.2,10.6 Z" fill="#f4f4f4"/></svg>
<svg class="a" style="left:386px;top:281px;" width="13" height="13" viewBox="0 0 13 13"><circle cx="6.5" cy="6.5" r="3.4" fill="#ffd27a"/><g stroke="#ffd27a" stroke-width="1.1"><line x1="6.5" y1="0" x2="6.5" y2="1.8"/><line x1="6.5" y1="11.2" x2="6.5" y2="13"/><line x1="0" y1="6.5" x2="1.8" y2="6.5"/><line x1="11.2" y1="6.5" x2="13" y2="6.5"/><line x1="2" y1="2" x2="2.8" y2="2.8"/><line x1="10.2" y1="10.2" x2="11" y2="11"/><line x1="2" y1="11" x2="2.8" y2="10.2"/><line x1="10.2" y1="2.8" x2="11" y2="2"/></g></svg>
<svg class="a" style="left:405px;top:281px;" width="12" height="12" viewBox="0 0 12 12"><path d="M6.8,5 L6.8,2.6 A2.1,2.1 0 0 1 11,2.6 L11,4.5" fill="none" stroke="#ffd27a" stroke-width="1.1"/><rect x="0" y="5" width="9" height="7" fill="#ffd27a"/><rect x="4" y="7" width="1.1" height="2.8" fill="#333"/></svg>
<svg class="a" style="left:190px;top:302px;" width="14" height="7" viewBox="0 0 14 7"><polygon points="6,0.5 13.5,0.5 7.5,6.5 0,6.5" fill="#8fcdf5" stroke="#3d7fb5" stroke-width="0.6"/></svg>
<div class="t" style="left:209.10px;top:300.14px;font-size:12px;line-height:13.40px;color:#eceef0;transform:scaleX(0.8999);transform-origin:0 0;">A-BLDG-SITE</div>
<svg class="a" style="left:370px;top:300px;" width="10" height="12" viewBox="0 0 10 12"><circle cx="4.7" cy="4.6" r="4.4" fill="#ffd27a"/><rect x="3.2" y="8" width="3" height="1.5" fill="#ffd27a"/><path d="M3.2,9.6 L6.2,9.6 L6.2,10.6 L4.7,11.8 L3.2,10.6 Z" fill="#f4f4f4"/></svg>
<svg class="a" style="left:386px;top:299px;" width="13" height="13" viewBox="0 0 13 13"><circle cx="6.5" cy="6.5" r="3.4" fill="#ffd27a"/><g stroke="#ffd27a" stroke-width="1.1"><line x1="6.5" y1="0" x2="6.5" y2="1.8"/><line x1="6.5" y1="11.2" x2="6.5" y2="13"/><line x1="0" y1="6.5" x2="1.8" y2="6.5"/><line x1="11.2" y1="6.5" x2="13" y2="6.5"/><line x1="2" y1="2" x2="2.8" y2="2.8"/><line x1="10.2" y1="10.2" x2="11" y2="11"/><line x1="2" y1="11" x2="2.8" y2="10.2"/><line x1="10.2" y1="2.8" x2="11" y2="2"/></g></svg>
<svg class="a" style="left:405px;top:299px;" width="12" height="12" viewBox="0 0 12 12"><path d="M6.8,5 L6.8,2.6 A2.1,2.1 0 0 1 11,2.6 L11,4.5" fill="none" stroke="#ffd27a" stroke-width="1.1"/><rect x="0" y="5" width="9" height="7" fill="#ffd27a"/><rect x="4" y="7" width="1.1" height="2.8" fill="#333"/></svg>
<svg class="a" style="left:190px;top:320px;" width="14" height="7" viewBox="0 0 14 7"><polygon points="6,0.5 13.5,0.5 7.5,6.5 0,6.5" fill="#8fcdf5" stroke="#3d7fb5" stroke-width="0.6"/></svg>
<div class="t" style="left:209.10px;top:318.14px;font-size:12px;line-height:13.40px;color:#eceef0;transform:scaleX(0.9320);transform-origin:0 0;">A-BLDG-UTIL</div>
<svg class="a" style="left:370px;top:318px;" width="10" height="12" viewBox="0 0 10 12"><circle cx="4.7" cy="4.6" r="4.4" fill="#ffd27a"/><rect x="3.2" y="8" width="3" height="1.5" fill="#ffd27a"/><path d="M3.2,9.6 L6.2,9.6 L6.2,10.6 L4.7,11.8 L3.2,10.6 Z" fill="#f4f4f4"/></svg>
<svg class="a" style="left:386px;top:317px;" width="13" height="13" viewBox="0 0 13 13"><circle cx="6.5" cy="6.5" r="3.4" fill="#ffd27a"/><g stroke="#ffd27a" stroke-width="1.1"><line x1="6.5" y1="0" x2="6.5" y2="1.8"/><line x1="6.5" y1="11.2" x2="6.5" y2="13"/><line x1="0" y1="6.5" x2="1.8" y2="6.5"/><line x1="11.2" y1="6.5" x2="13" y2="6.5"/><line x1="2" y1="2" x2="2.8" y2="2.8"/><line x1="10.2" y1="10.2" x2="11" y2="11"/><line x1="2" y1="11" x2="2.8" y2="10.2"/><line x1="10.2" y1="2.8" x2="11" y2="2"/></g></svg>
<svg class="a" style="left:405px;top:317px;" width="12" height="12" viewBox="0 0 12 12"><path d="M6.8,5 L6.8,2.6 A2.1,2.1 0 0 1 11,2.6 L11,4.5" fill="none" stroke="#ffd27a" stroke-width="1.1"/><rect x="0" y="5" width="9" height="7" fill="#ffd27a"/><rect x="4" y="7" width="1.1" height="2.8" fill="#333"/></svg>
<svg class="a" style="left:190px;top:338px;" width="14" height="7" viewBox="0 0 14 7"><polygon points="6,0.5 13.5,0.5 7.5,6.5 0,6.5" fill="#8fcdf5" stroke="#3d7fb5" stroke-width="0.6"/></svg>
<div class="t" style="left:209.10px;top:336.14px;font-size:12px;line-height:13.40px;color:#eceef0;transform:scaleX(0.9350);transform-origin:0 0;">A-PROP-LINE</div>
<svg class="a" style="left:370px;top:336px;" width="10" height="12" viewBox="0 0 10 12"><circle cx="4.7" cy="4.6" r="4.4" fill="#ffd27a"/><rect x="3.2" y="8" width="3" height="1.5" fill="#ffd27a"/><path d="M3.2,9.6 L6.2,9.6 L6.2,10.6 L4.7,11.8 L3.2,10.6 Z" fill="#f4f4f4"/></svg>
<svg class="a" style="left:386px;top:335px;" width="13" height="13" viewBox="0 0 13 13"><circle cx="6.5" cy="6.5" r="3.4" fill="#ffd27a"/><g stroke="#ffd27a" stroke-width="1.1"><line x1="6.5" y1="0" x2="6.5" y2="1.8"/><line x1="6.5" y1="11.2" x2="6.5" y2="13"/><line x1="0" y1="6.5" x2="1.8" y2="6.5"/><line x1="11.2" y1="6.5" x2="13" y2="6.5"/><line x1="2" y1="2" x2="2.8" y2="2.8"/><line x1="10.2" y1="10.2" x2="11" y2="11"/><line x1="2" y1="11" x2="2.8" y2="10.2"/><line x1="10.2" y1="2.8" x2="11" y2="2"/></g></svg>
<svg class="a" style="left:405px;top:335px;" width="12" height="12" viewBox="0 0 12 12"><path d="M6.8,5 L6.8,2.6 A2.1,2.1 0 0 1 11,2.6 L11,4.5" fill="none" stroke="#ffd27a" stroke-width="1.1"/><rect x="0" y="5" width="9" height="7" fill="#ffd27a"/><rect x="4" y="7" width="1.1" height="2.8" fill="#333"/></svg>
<svg class="a" style="left:190px;top:356px;" width="14" height="7" viewBox="0 0 14 7"><polygon points="6,0.5 13.5,0.5 7.5,6.5 0,6.5" fill="#8fcdf5" stroke="#3d7fb5" stroke-width="0.6"/></svg>
<div class="t" style="left:209.10px;top:354.14px;font-size:12px;line-height:13.40px;color:#eceef0;transform:scaleX(0.9887);transform-origin:0 0;">C-ANNO</div>
<svg class="a" style="left:370px;top:354px;" width="10" height="12" viewBox="0 0 10 12"><circle cx="4.7" cy="4.6" r="4.4" fill="#ffd27a"/><rect x="3.2" y="8" width="3" height="1.5" fill="#ffd27a"/><path d="M3.2,9.6 L6.2,9.6 L6.2,10.6 L4.7,11.8 L3.2,10.6 Z" fill="#f4f4f4"/></svg>
<svg class="a" style="left:386px;top:353px;" width="13" height="13" viewBox="0 0 13 13"><circle cx="6.5" cy="6.5" r="3.4" fill="#ffd27a"/><g stroke="#ffd27a" stroke-width="1.1"><line x1="6.5" y1="0" x2="6.5" y2="1.8"/><line x1="6.5" y1="11.2" x2="6.5" y2="13"/><line x1="0" y1="6.5" x2="1.8" y2="6.5"/><line x1="11.2" y1="6.5" x2="13" y2="6.5"/><line x1="2" y1="2" x2="2.8" y2="2.8"/><line x1="10.2" y1="10.2" x2="11" y2="11"/><line x1="2" y1="11" x2="2.8" y2="10.2"/><line x1="10.2" y1="2.8" x2="11" y2="2"/></g></svg>
<svg class="a" style="left:405px;top:353px;" width="12" height="12" viewBox="0 0 12 12"><path d="M6.8,5 L6.8,2.6 A2.1,2.1 0 0 1 11,2.6 L11,4.5" fill="none" stroke="#ffd27a" stroke-width="1.1"/><rect x="0" y="5" width="9" height="7" fill="#ffd27a"/><rect x="4" y="7" width="1.1" height="2.8" fill="#333"/></svg>
<svg class="a" style="left:190px;top:374px;" width="14" height="7" viewBox="0 0 14 7"><polygon points="6,0.5 13.5,0.5 7.5,6.5 0,6.5" fill="#8fcdf5" stroke="#3d7fb5" stroke-width="0.6"/></svg>
<div class="t" style="left:209.10px;top:372.14px;font-size:12px;line-height:13.40px;color:#eceef0;transform:scaleX(0.9937);transform-origin:0 0;">C-ANNO-MATC</div>
<svg class="a" style="left:370px;top:372px;" width="10" height="12" viewBox="0 0 10 12"><circle cx="4.7" cy="4.6" r="4.4" fill="#ffd27a"/><rect x="3.2" y="8" width="3" height="1.5" fill="#ffd27a"/><path d="M3.2,9.6 L6.2,9.6 L6.2,10.6 L4.7,11.8 L3.2,10.6 Z" fill="#f4f4f4"/></svg>
<svg class="a" style="left:386px;top:371px;" width="13" height="13" viewBox="0 0 13 13"><circle cx="6.5" cy="6.5" r="3.4" fill="#ffd27a"/><g stroke="#ffd27a" stroke-width="1.1"><line x1="6.5" y1="0" x2="6.5" y2="1.8"/><line x1="6.5" y1="11.2" x2="6.5" y2="13"/><line x1="0" y1="6.5" x2="1.8" y2="6.5"/><line x1="11.2" y1="6.5" x2="13" y2="6.5"/><line x1="2" y1="2" x2="2.8" y2="2.8"/><line x1="10.2" y1="10.2" x2="11" y2="11"/><line x1="2" y1="11" x2="2.8" y2="10.2"/><line x1="10.2" y1="2.8" x2="11" y2="2"/></g></svg>
<svg class="a" style="left:405px;top:371px;" width="12" height="12" viewBox="0 0 12 12"><path d="M6.8,5 L6.8,2.6 A2.1,2.1 0 0 1 11,2.6 L11,4.5" fill="none" stroke="#ffd27a" stroke-width="1.1"/><rect x="0" y="5" width="9" height="7" fill="#ffd27a"/><rect x="4" y="7" width="1.1" height="2.8" fill="#333"/></svg>
<svg class="a" style="left:190px;top:392px;" width="14" height="7" viewBox="0 0 14 7"><polygon points="6,0.5 13.5,0.5 7.5,6.5 0,6.5" fill="#8fcdf5" stroke="#3d7fb5" stroke-width="0.6"/></svg>
<div class="t" style="left:209.10px;top:390.14px;font-size:12px;line-height:13.40px;color:#eceef0;transform:scaleX(0.9879);transform-origin:0 0;">C-ANNO-MATC-PATT</div>
<svg class="a" style="left:370px;top:390px;" width="10" height="12" viewBox="0 0 10 12"><circle cx="4.7" cy="4.6" r="4.4" fill="#ffd27a"/><rect x="3.2" y="8" width="3" height="1.5" fill="#ffd27a"/><path d="M3.2,9.6 L6.2,9.6 L6.2,10.6 L4.7,11.8 L3.2,10.6 Z" fill="#f4f4f4"/></svg>
<svg class="a" style="left:386px;top:389px;" width="13" height="13" viewBox="0 0 13 13"><circle cx="6.5" cy="6.5" r="3.4" fill="#ffd27a"/><g stroke="#ffd27a" stroke-width="1.1"><line x1="6.5" y1="0" x2="6.5" y2="1.8"/><line x1="6.5" y1="11.2" x2="6.5" y2="13"/><line x1="0" y1="6.5" x2="1.8" y2="6.5"/><line x1="11.2" y1="6.5" x2="13" y2="6.5"/><line x1="2" y1="2" x2="2.8" y2="2.8"/><line x1="10.2" y1="10.2" x2="11" y2="11"/><line x1="2" y1="11" x2="2.8" y2="10.2"/><line x1="10.2" y1="2.8" x2="11" y2="2"/></g></svg>
<svg class="a" style="left:405px;top:389px;" width="12" height="12" viewBox="0 0 12 12"><path d="M6.8,5 L6.8,2.6 A2.1,2.1 0 0 1 11,2.6 L11,4.5" fill="none" stroke="#ffd27a" stroke-width="1.1"/><rect x="0" y="5" width="9" height="7" fill="#ffd27a"/><rect x="4" y="7" width="1.1" height="2.8" fill="#333"/></svg>
<svg class="a" style="left:190px;top:410px;" width="14" height="7" viewBox="0 0 14 7"><polygon points="6,0.5 13.5,0.5 7.5,6.5 0,6.5" fill="#8fcdf5" stroke="#3d7fb5" stroke-width="0.6"/></svg>
<div class="t" style="left:209.10px;top:408.14px;font-size:12px;line-height:13.40px;color:#eceef0;transform:scaleX(0.9555);transform-origin:0 0;">C-ANNO-MATC-TEXT</div>
<svg class="a" style="left:370px;top:408px;" width="10" height="12" viewBox="0 0 10 12"><circle cx="4.7" cy="4.6" r="4.4" fill="#ffd27a"/><rect x="3.2" y="8" width="3" height="1.5" fill="#ffd27a"/><path d="M3.2,9.6 L6.2,9.6 L6.2,10.6 L4.7,11.8 L3.2,10.6 Z" fill="#f4f4f4"/></svg>
<svg class="a" style="left:386px;top:407px;" width="13" height="13" viewBox="0 0 13 13"><circle cx="6.5" cy="6.5" r="3.4" fill="#ffd27a"/><g stroke="#ffd27a" stroke-width="1.1"><line x1="6.5" y1="0" x2="6.5" y2="1.8"/><line x1="6.5" y1="11.2" x2="6.5" y2="13"/><line x1="0" y1="6.5" x2="1.8" y2="6.5"/><line x1="11.2" y1="6.5" x2="13" y2="6.5"/><line x1="2" y1="2" x2="2.8" y2="2.8"/><line x1="10.2" y1="10.2" x2="11" y2="11"/><line x1="2" y1="11" x2="2.8" y2="10.2"/><line x1="10.2" y1="2.8" x2="11" y2="2"/></g></svg>
<svg class="a" style="left:405px;top:407px;" width="12" height="12" viewBox="0 0 12 12"><path d="M6.8,5 L6.8,2.6 A2.1,2.1 0 0 1 11,2.6 L11,4.5" fill="none" stroke="#ffd27a" stroke-width="1.1"/><rect x="0" y="5" width="9" height="7" fill="#ffd27a"/><rect x="4" y="7" width="1.1" height="2.8" fill="#333"/></svg>
<svg class="a" style="left:190px;top:428px;" width="14" height="7" viewBox="0 0 14 7"><polygon points="6,0.5 13.5,0.5 7.5,6.5 0,6.5" fill="#8fcdf5" stroke="#3d7fb5" stroke-width="0.6"/></svg>
<div class="t" style="left:209.10px;top:426.14px;font-size:12px;line-height:13.40px;color:#eceef0;transform:scaleX(0.9733);transform-origin:0 0;">C-ANNO-TABL</div>
<svg class="a" style="left:370px;top:426px;" width="10" height="12" viewBox="0 0 10 12"><circle cx="4.7" cy="4.6" r="4.4" fill="#ffd27a"/><rect x="3.2" y="8" width="3" height="1.5" fill="#ffd27a"/><path d="M3.2,9.6 L6.2,9.6 L6.2,10.6 L4.7,11.8 L3.2,10.6 Z" fill="#f4f4f4"/></svg>
<svg class="a" style="left:386px;top:425px;" width="13" height="13" viewBox="0 0 13 13"><circle cx="6.5" cy="6.5" r="3.4" fill="#ffd27a"/><g stroke="#ffd27a" stroke-width="1.1"><line x1="6.5" y1="0" x2="6.5" y2="1.8"/><line x1="6.5" y1="11.2" x2="6.5" y2="13"/><line x1="0" y1="6.5" x2="1.8" y2="6.5"/><line x1="11.2" y1="6.5" x2="13" y2="6.5"/><line x1="2" y1="2" x2="2.8" y2="2.8"/><line x1="10.2" y1="10.2" x2="11" y2="11"/><line x1="2" y1="11" x2="2.8" y2="10.2"/><line x1="10.2" y1="2.8" x2="11" y2="2"/></g></svg>
<svg class="a" style="left:405px;top:425px;" width="12" height="12" viewBox="0 0 12 12"><path d="M6.8,5 L6.8,2.6 A2.1,2.1 0 0 1 11,2.6 L11,4.5" fill="none" stroke="#ffd27a" stroke-width="1.1"/><rect x="0" y="5" width="9" height="7" fill="#ffd27a"/><rect x="4" y="7" width="1.1" height="2.8" fill="#333"/></svg>
<svg class="a" style="left:190px;top:446px;" width="14" height="7" viewBox="0 0 14 7"><polygon points="6,0.5 13.5,0.5 7.5,6.5 0,6.5" fill="#8fcdf5" stroke="#3d7fb5" stroke-width="0.6"/></svg>
<div class="t" style="left:209.10px;top:444.14px;font-size:12px;line-height:13.40px;color:#eceef0;transform:scaleX(0.9812);transform-origin:0 0;">C-ANNO-TABL-PATT</div>
<svg class="a" style="left:370px;top:444px;" width="10" height="12" viewBox="0 0 10 12"><circle cx="4.7" cy="4.6" r="4.4" fill="#ffd27a"/><rect x="3.2" y="8" width="3" height="1.5" fill="#ffd27a"/><path d="M3.2,9.6 L6.2,9.6 L6.2,10.6 L4.7,11.8 L3.2,10.6 Z" fill="#f4f4f4"/></svg>
<svg class="a" style="left:386px;top:443px;" width="13" height="13" viewBox="0 0 13 13"><circle cx="6.5" cy="6.5" r="3.4" fill="#ffd27a"/><g stroke="#ffd27a" stroke-width="1.1"><line x1="6.5" y1="0" x2="6.5" y2="1.8"/><line x1="6.5" y1="11.2" x2="6.5" y2="13"/><line x1="0" y1="6.5" x2="1.8" y2="6.5"/><line x1="11.2" y1="6.5" x2="13" y2="6.5"/><line x1="2" y1="2" x2="2.8" y2="2.8"/><line x1="10.2" y1="10.2" x2="11" y2="11"/><line x1="2" y1="11" x2="2.8" y2="10.2"/><line x1="10.2" y1="2.8" x2="11" y2="2"/></g></svg>
<svg class="a" style="left:405px;top:443px;" width="12" height="12" viewBox="0 0 12 12"><path d="M6.8,5 L6.8,2.6 A2.1,2.1 0 0 1 11,2.6 L11,4.5" fill="none" stroke="#ffd27a" stroke-width="1.1"/><rect x="0" y="5" width="9" height="7" fill="#ffd27a"/><rect x="4" y="7" width="1.1" height="2.8" fill="#333"/></svg>
<svg class="a" style="left:190px;top:464px;" width="14" height="7" viewBox="0 0 14 7"><polygon points="6,0.5 13.5,0.5 7.5,6.5 0,6.5" fill="#8fcdf5" stroke="#3d7fb5" stroke-width="0.6"/></svg>
<div class="t" style="left:209.10px;top:462.14px;font-size:12px;line-height:13.40px;color:#eceef0;transform:scaleX(0.9417);transform-origin:0 0;">C-ANNO-TABL-TEXT</div>
<svg class="a" style="left:370px;top:462px;" width="10" height="12" viewBox="0 0 10 12"><circle cx="4.7" cy="4.6" r="4.4" fill="#ffd27a"/><rect x="3.2" y="8" width="3" height="1.5" fill="#ffd27a"/><path d="M3.2,9.6 L6.2,9.6 L6.2,10.6 L4.7,11.8 L3.2,10.6 Z" fill="#f4f4f4"/></svg>
<svg class="a" style="left:386px;top:461px;" width="13" height="13" viewBox="0 0 13 13"><circle cx="6.5" cy="6.5" r="3.4" fill="#ffd27a"/><g stroke="#ffd27a" stroke-width="1.1"><line x1="6.5" y1="0" x2="6.5" y2="1.8"/><line x1="6.5" y1="11.2" x2="6.5" y2="13"/><line x1="0" y1="6.5" x2="1.8" y2="6.5"/><line x1="11.2" y1="6.5" x2="13" y2="6.5"/><line x1="2" y1="2" x2="2.8" y2="2.8"/><line x1="10.2" y1="10.2" x2="11" y2="11"/><line x1="2" y1="11" x2="2.8" y2="10.2"/><line x1="10.2" y1="2.8" x2="11" y2="2"/></g></svg>
<svg class="a" style="left:405px;top:461px;" width="12" height="12" viewBox="0 0 12 12"><path d="M6.8,5 L6.8,2.6 A2.1,2.1 0 0 1 11,2.6 L11,4.5" fill="none" stroke="#ffd27a" stroke-width="1.1"/><rect x="0" y="5" width="9" height="7" fill="#ffd27a"/><rect x="4" y="7" width="1.1" height="2.8" fill="#333"/></svg>
<svg class="a" style="left:190px;top:482px;" width="14" height="7" viewBox="0 0 14 7"><polygon points="6,0.5 13.5,0.5 7.5,6.5 0,6.5" fill="#8fcdf5" stroke="#3d7fb5" stroke-width="0.6"/></svg>
<div class="t" style="left:209.10px;top:480.14px;font-size:12px;line-height:13.40px;color:#eceef0;transform:scaleX(0.9577);transform-origin:0 0;">C-ANNO-TABL-TITL</div>
<svg class="a" style="left:370px;top:480px;" width="10" height="12" viewBox="0 0 10 12"><circle cx="4.7" cy="4.6" r="4.4" fill="#ffd27a"/><rect x="3.2" y="8" width="3" height="1.5" fill="#ffd27a"/><path d="M3.2,9.6 L6.2,9.6 L6.2,10.6 L4.7,11.8 L3.2,10.6 Z" fill="#f4f4f4"/></svg>
<svg class="a" style="left:386px;top:479px;" width="13" height="13" viewBox="0 0 13 13"><circle cx="6.5" cy="6.5" r="3.4" fill="#ffd27a"/><g stroke="#ffd27a" stroke-width="1.1"><line x1="6.5" y1="0" x2="6.5" y2="1.8"/><line x1="6.5" y1="11.2" x2="6.5" y2="13"/><line x1="0" y1="6.5" x2="1.8" y2="6.5"/><line x1="11.2" y1="6.5" x2="13" y2="6.5"/><line x1="2" y1="2" x2="2.8" y2="2.8"/><line x1="10.2" y1="10.2" x2="11" y2="11"/><line x1="2" y1="11" x2="2.8" y2="10.2"/><line x1="10.2" y1="2.8" x2="11" y2="2"/></g></svg>
<svg class="a" style="left:405px;top:479px;" width="12" height="12" viewBox="0 0 12 12"><path d="M6.8,5 L6.8,2.6 A2.1,2.1 0 0 1 11,2.6 L11,4.5" fill="none" stroke="#ffd27a" stroke-width="1.1"/><rect x="0" y="5" width="9" height="7" fill="#ffd27a"/><rect x="4" y="7" width="1.1" height="2.8" fill="#333"/></svg>
<svg class="a" style="left:190px;top:500px;" width="14" height="7" viewBox="0 0 14 7"><polygon points="6,0.5 13.5,0.5 7.5,6.5 0,6.5" fill="#8fcdf5" stroke="#3d7fb5" stroke-width="0.6"/></svg>
<div class="t" style="left:209.10px;top:498.14px;font-size:12px;line-height:13.40px;color:#eceef0;transform:scaleX(0.9527);transform-origin:0 0;">C-ANNO-TABL-TTBL</div>
<svg class="a" style="left:370px;top:498px;" width="10" height="12" viewBox="0 0 10 12"><circle cx="4.7" cy="4.6" r="4.4" fill="#ffd27a"/><rect x="3.2" y="8" width="3" height="1.5" fill="#ffd27a"/><path d="M3.2,9.6 L6.2,9.6 L6.2,10.6 L4.7,11.8 L3.2,10.6 Z" fill="#f4f4f4"/></svg>
<svg class="a" style="left:386px;top:497px;" width="13" height="13" viewBox="0 0 13 13"><circle cx="6.5" cy="6.5" r="3.4" fill="#ffd27a"/><g stroke="#ffd27a" stroke-width="1.1"><line x1="6.5" y1="0" x2="6.5" y2="1.8"/><line x1="6.5" y1="11.2" x2="6.5" y2="13"/><line x1="0" y1="6.5" x2="1.8" y2="6.5"/><line x1="11.2" y1="6.5" x2="13" y2="6.5"/><line x1="2" y1="2" x2="2.8" y2="2.8"/><line x1="10.2" y1="10.2" x2="11" y2="11"/><line x1="2" y1="11" x2="2.8" y2="10.2"/><line x1="10.2" y1="2.8" x2="11" y2="2"/></g></svg>
<svg class="a" style="left:405px;top:497px;" width="12" height="12" viewBox="0 0 12 12"><path d="M6.8,5 L6.8,2.6 A2.1,2.1 0 0 1 11,2.6 L11,4.5" fill="none" stroke="#ffd27a" stroke-width="1.1"/><rect x="0" y="5" width="9" height="7" fill="#ffd27a"/><rect x="4" y="7" width="1.1" height="2.8" fill="#333"/></svg>
<svg class="a" style="left:190px;top:518px;" width="14" height="7" viewBox="0 0 14 7"><polygon points="6,0.5 13.5,0.5 7.5,6.5 0,6.5" fill="#8fcdf5" stroke="#3d7fb5" stroke-width="0.6"/></svg>
<div class="t" style="left:209.10px;top:516.14px;font-size:12px;line-height:13.40px;color:#eceef0;transform:scaleX(0.9634);transform-origin:0 0;">C-ANNO-VFRM</div>
<svg class="a" style="left:370px;top:516px;" width="10" height="12" viewBox="0 0 10 12"><circle cx="4.7" cy="4.6" r="4.4" fill="#ffd27a"/><rect x="3.2" y="8" width="3" height="1.5" fill="#ffd27a"/><path d="M3.2,9.6 L6.2,9.6 L6.2,10.6 L4.7,11.8 L3.2,10.6 Z" fill="#f4f4f4"/></svg>
<svg class="a" style="left:386px;top:515px;" width="13" height="13" viewBox="0 0 13 13"><circle cx="6.5" cy="6.5" r="3.4" fill="#ffd27a"/><g stroke="#ffd27a" stroke-width="1.1"><line x1="6.5" y1="0" x2="6.5" y2="1.8"/><line x1="6.5" y1="11.2" x2="6.5" y2="13"/><line x1="0" y1="6.5" x2="1.8" y2="6.5"/><line x1="11.2" y1="6.5" x2="13" y2="6.5"/><line x1="2" y1="2" x2="2.8" y2="2.8"/><line x1="10.2" y1="10.2" x2="11" y2="11"/><line x1="2" y1="11" x2="2.8" y2="10.2"/><line x1="10.2" y1="2.8" x2="11" y2="2"/></g></svg>
<svg class="a" style="left:405px;top:515px;" width="12" height="12" viewBox="0 0 12 12"><path d="M6.8,5 L6.8,2.6 A2.1,2.1 0 0 1 11,2.6 L11,4.5" fill="none" stroke="#ffd27a" stroke-width="1.1"/><rect x="0" y="5" width="9" height="7" fill="#ffd27a"/><rect x="4" y="7" width="1.1" height="2.8" fill="#333"/></svg>
<svg class="a" style="left:190px;top:536px;" width="14" height="7" viewBox="0 0 14 7"><polygon points="6,0.5 13.5,0.5 7.5,6.5 0,6.5" fill="#8fcdf5" stroke="#3d7fb5" stroke-width="0.6"/></svg>
<div class="t" style="left:209.10px;top:534.14px;font-size:12px;line-height:13.40px;color:#eceef0;transform:scaleX(0.9401);transform-origin:0 0;">C-ANNO-VFRM-TEXT</div>
<svg class="a" style="left:370px;top:534px;" width="10" height="12" viewBox="0 0 10 12"><circle cx="4.7" cy="4.6" r="4.4" fill="#ffd27a"/><rect x="3.2" y="8" width="3" height="1.5" fill="#ffd27a"/><path d="M3.2,9.6 L6.2,9.6 L6.2,10.6 L4.7,11.8 L3.2,10.6 Z" fill="#f4f4f4"/></svg>
<svg class="a" style="left:386px;top:533px;" width="13" height="13" viewBox="0 0 13 13"><circle cx="6.5" cy="6.5" r="3.4" fill="#ffd27a"/><g stroke="#ffd27a" stroke-width="1.1"><line x1="6.5" y1="0" x2="6.5" y2="1.8"/><line x1="6.5" y1="11.2" x2="6.5" y2="13"/><line x1="0" y1="6.5" x2="1.8" y2="6.5"/><line x1="11.2" y1="6.5" x2="13" y2="6.5"/><line x1="2" y1="2" x2="2.8" y2="2.8"/><line x1="10.2" y1="10.2" x2="11" y2="11"/><line x1="2" y1="11" x2="2.8" y2="10.2"/><line x1="10.2" y1="2.8" x2="11" y2="2"/></g></svg>
<svg class="a" style="left:405px;top:533px;" width="12" height="12" viewBox="0 0 12 12"><path d="M6.8,5 L6.8,2.6 A2.1,2.1 0 0 1 11,2.6 L11,4.5" fill="none" stroke="#ffd27a" stroke-width="1.1"/><rect x="0" y="5" width="9" height="7" fill="#ffd27a"/><rect x="4" y="7" width="1.1" height="2.8" fill="#333"/></svg>
<svg class="a" style="left:190px;top:554px;" width="14" height="7" viewBox="0 0 14 7"><polygon points="6,0.5 13.5,0.5 7.5,6.5 0,6.5" fill="#8fcdf5" stroke="#3d7fb5" stroke-width="0.6"/></svg>
<div class="t" style="left:209.10px;top:552.14px;font-size:12px;line-height:13.40px;color:#eceef0;transform:scaleX(0.9179);transform-origin:0 0;">C-BRDG-ABUTMENT</div>
<svg class="a" style="left:370px;top:552px;" width="10" height="12" viewBox="0 0 10 12"><circle cx="4.7" cy="4.6" r="4.4" fill="#ffd27a"/><rect x="3.2" y="8" width="3" height="1.5" fill="#ffd27a"/><path d="M3.2,9.6 L6.2,9.6 L6.2,10.6 L4.7,11.8 L3.2,10.6 Z" fill="#f4f4f4"/></svg>
<svg class="a" style="left:386px;top:551px;" width="13" height="13" viewBox="0 0 13 13"><circle cx="6.5" cy="6.5" r="3.4" fill="#ffd27a"/><g stroke="#ffd27a" stroke-width="1.1"><line x1="6.5" y1="0" x2="6.5" y2="1.8"/><line x1="6.5" y1="11.2" x2="6.5" y2="13"/><line x1="0" y1="6.5" x2="1.8" y2="6.5"/><line x1="11.2" y1="6.5" x2="13" y2="6.5"/><line x1="2" y1="2" x2="2.8" y2="2.8"/><line x1="10.2" y1="10.2" x2="11" y2="11"/><line x1="2" y1="11" x2="2.8" y2="10.2"/><line x1="10.2" y1="2.8" x2="11" y2="2"/></g></svg>
<svg class="a" style="left:405px;top:551px;" width="12" height="12" viewBox="0 0 12 12"><path d="M6.8,5 L6.8,2.6 A2.1,2.1 0 0 1 11,2.6 L11,4.5" fill="none" stroke="#ffd27a" stroke-width="1.1"/><rect x="0" y="5" width="9" height="7" fill="#ffd27a"/><rect x="4" y="7" width="1.1" height="2.8" fill="#333"/></svg>
<svg class="a" style="left:190px;top:572px;" width="14" height="7" viewBox="0 0 14 7"><polygon points="6,0.5 13.5,0.5 7.5,6.5 0,6.5" fill="#8fcdf5" stroke="#3d7fb5" stroke-width="0.6"/></svg>
<div class="t" style="left:209.10px;top:570.14px;font-size:12px;line-height:13.40px;color:#eceef0;transform:scaleX(0.8834);transform-origin:0 0;">C-BRDG-DECK</div>
<svg class="a" style="left:370px;top:570px;" width="10" height="12" viewBox="0 0 10 12"><circle cx="4.7" cy="4.6" r="4.4" fill="#ffd27a"/><rect x="3.2" y="8" width="3" height="1.5" fill="#ffd27a"/><path d="M3.2,9.6 L6.2,9.6 L6.2,10.6 L4.7,11.8 L3.2,10.6 Z" fill="#f4f4f4"/></svg>
<svg class="a" style="left:386px;top:569px;" width="13" height="13" viewBox="0 0 13 13"><circle cx="6.5" cy="6.5" r="3.4" fill="#ffd27a"/><g stroke="#ffd27a" stroke-width="1.1"><line x1="6.5" y1="0" x2="6.5" y2="1.8"/><line x1="6.5" y1="11.2" x2="6.5" y2="13"/><line x1="0" y1="6.5" x2="1.8" y2="6.5"/><line x1="11.2" y1="6.5" x2="13" y2="6.5"/><line x1="2" y1="2" x2="2.8" y2="2.8"/><line x1="10.2" y1="10.2" x2="11" y2="11"/><line x1="2" y1="11" x2="2.8" y2="10.2"/><line x1="10.2" y1="2.8" x2="11" y2="2"/></g></svg>
<svg class="a" style="left:405px;top:569px;" width="12" height="12" viewBox="0 0 12 12"><path d="M6.8,5 L6.8,2.6 A2.1,2.1 0 0 1 11,2.6 L11,4.5" fill="none" stroke="#ffd27a" stroke-width="1.1"/><rect x="0" y="5" width="9" height="7" fill="#ffd27a"/><rect x="4" y="7" width="1.1" height="2.8" fill="#333"/></svg>
<svg class="a" style="left:190px;top:590px;" width="14" height="7" viewBox="0 0 14 7"><polygon points="6,0.5 13.5,0.5 7.5,6.5 0,6.5" fill="#8fcdf5" stroke="#3d7fb5" stroke-width="0.6"/></svg>
<div class="t" style="left:209.10px;top:588.14px;font-size:12px;line-height:13.40px;color:#eceef0;transform:scaleX(0.9332);transform-origin:0 0;">C-BRDG-FOUNDATION</div>
<svg class="a" style="left:370px;top:588px;" width="10" height="12" viewBox="0 0 10 12"><circle cx="4.7" cy="4.6" r="4.4" fill="#ffd27a"/><rect x="3.2" y="8" width="3" height="1.5" fill="#ffd27a"/><path d="M3.2,9.6 L6.2,9.6 L6.2,10.6 L4.7,11.8 L3.2,10.6 Z" fill="#f4f4f4"/></svg>
<svg class="a" style="left:386px;top:587px;" width="13" height="13" viewBox="0 0 13 13"><circle cx="6.5" cy="6.5" r="3.4" fill="#ffd27a"/><g stroke="#ffd27a" stroke-width="1.1"><line x1="6.5" y1="0" x2="6.5" y2="1.8"/><line x1="6.5" y1="11.2" x2="6.5" y2="13"/><line x1="0" y1="6.5" x2="1.8" y2="6.5"/><line x1="11.2" y1="6.5" x2="13" y2="6.5"/><line x1="2" y1="2" x2="2.8" y2="2.8"/><line x1="10.2" y1="10.2" x2="11" y2="11"/><line x1="2" y1="11" x2="2.8" y2="10.2"/><line x1="10.2" y1="2.8" x2="11" y2="2"/></g></svg>
<svg class="a" style="left:405px;top:587px;" width="12" height="12" viewBox="0 0 12 12"><path d="M6.8,5 L6.8,2.6 A2.1,2.1 0 0 1 11,2.6 L11,4.5" fill="none" stroke="#ffd27a" stroke-width="1.1"/><rect x="0" y="5" width="9" height="7" fill="#ffd27a"/><rect x="4" y="7" width="1.1" height="2.8" fill="#333"/></svg>
<svg class="a" style="left:190px;top:608px;" width="14" height="7" viewBox="0 0 14 7"><polygon points="6,0.5 13.5,0.5 7.5,6.5 0,6.5" fill="#8fcdf5" stroke="#3d7fb5" stroke-width="0.6"/></svg>
<div class="t" style="left:209.10px;top:606.14px;font-size:12px;line-height:13.40px;color:#eceef0;transform:scaleX(0.8582);transform-origin:0 0;">C-BRDG-GENERICOBJECT</div>
<svg class="a" style="left:370px;top:606px;" width="10" height="12" viewBox="0 0 10 12"><circle cx="4.7" cy="4.6" r="4.4" fill="#ffd27a"/><rect x="3.2" y="8" width="3" height="1.5" fill="#ffd27a"/><path d="M3.2,9.6 L6.2,9.6 L6.2,10.6 L4.7,11.8 L3.2,10.6 Z" fill="#f4f4f4"/></svg>
<svg class="a" style="left:386px;top:605px;" width="13" height="13" viewBox="0 0 13 13"><circle cx="6.5" cy="6.5" r="3.4" fill="#ffd27a"/><g stroke="#ffd27a" stroke-width="1.1"><line x1="6.5" y1="0" x2="6.5" y2="1.8"/><line x1="6.5" y1="11.2" x2="6.5" y2="13"/><line x1="0" y1="6.5" x2="1.8" y2="6.5"/><line x1="11.2" y1="6.5" x2="13" y2="6.5"/><line x1="2" y1="2" x2="2.8" y2="2.8"/><line x1="10.2" y1="10.2" x2="11" y2="11"/><line x1="2" y1="11" x2="2.8" y2="10.2"/><line x1="10.2" y1="2.8" x2="11" y2="2"/></g></svg>
<svg class="a" style="left:405px;top:605px;" width="12" height="12" viewBox="0 0 12 12"><path d="M6.8,5 L6.8,2.6 A2.1,2.1 0 0 1 11,2.6 L11,4.5" fill="none" stroke="#ffd27a" stroke-width="1.1"/><rect x="0" y="5" width="9" height="7" fill="#ffd27a"/><rect x="4" y="7" width="1.1" height="2.8" fill="#333"/></svg>
<svg class="a" style="left:190px;top:626px;" width="14" height="7" viewBox="0 0 14 7"><polygon points="6,0.5 13.5,0.5 7.5,6.5 0,6.5" fill="#8fcdf5" stroke="#3d7fb5" stroke-width="0.6"/></svg>
<div class="t" style="left:209.10px;top:624.14px;font-size:12px;line-height:13.40px;color:#eceef0;transform:scaleX(0.8755);transform-origin:0 0;">C-BRDG-GIRDER</div>
<svg class="a" style="left:370px;top:624px;" width="10" height="12" viewBox="0 0 10 12"><circle cx="4.7" cy="4.6" r="4.4" fill="#ffd27a"/><rect x="3.2" y="8" width="3" height="1.5" fill="#ffd27a"/><path d="M3.2,9.6 L6.2,9.6 L6.2,10.6 L4.7,11.8 L3.2,10.6 Z" fill="#f4f4f4"/></svg>
<svg class="a" style="left:386px;top:623px;" width="13" height="13" viewBox="0 0 13 13"><circle cx="6.5" cy="6.5" r="3.4" fill="#ffd27a"/><g stroke="#ffd27a" stroke-width="1.1"><line x1="6.5" y1="0" x2="6.5" y2="1.8"/><line x1="6.5" y1="11.2" x2="6.5" y2="13"/><line x1="0" y1="6.5" x2="1.8" y2="6.5"/><line x1="11.2" y1="6.5" x2="13" y2="6.5"/><line x1="2" y1="2" x2="2.8" y2="2.8"/><line x1="10.2" y1="10.2" x2="11" y2="11"/><line x1="2" y1="11" x2="2.8" y2="10.2"/><line x1="10.2" y1="2.8" x2="11" y2="2"/></g></svg>
<svg class="a" style="left:405px;top:623px;" width="12" height="12" viewBox="0 0 12 12"><path d="M6.8,5 L6.8,2.6 A2.1,2.1 0 0 1 11,2.6 L11,4.5" fill="none" stroke="#ffd27a" stroke-width="1.1"/><rect x="0" y="5" width="9" height="7" fill="#ffd27a"/><rect x="4" y="7" width="1.1" height="2.8" fill="#333"/></svg>
<svg class="a" style="left:190px;top:644px;" width="14" height="7" viewBox="0 0 14 7"><polygon points="6,0.5 13.5,0.5 7.5,6.5 0,6.5" fill="#8fcdf5" stroke="#3d7fb5" stroke-width="0.6"/></svg>
<div class="t" style="left:209.10px;top:642.14px;font-size:12px;line-height:13.40px;color:#eceef0;transform:scaleX(0.8811);transform-origin:0 0;">C-BRDG-PIER</div>
<svg class="a" style="left:370px;top:642px;" width="10" height="12" viewBox="0 0 10 12"><circle cx="4.7" cy="4.6" r="4.4" fill="#ffd27a"/><rect x="3.2" y="8" width="3" height="1.5" fill="#ffd27a"/><path d="M3.2,9.6 L6.2,9.6 L6.2,10.6 L4.7,11.8 L3.2,10.6 Z" fill="#f4f4f4"/></svg>
<svg class="a" style="left:386px;top:641px;" width="13" height="13" viewBox="0 0 13 13"><circle cx="6.5" cy="6.5" r="3.4" fill="#ffd27a"/><g stroke="#ffd27a" stroke-width="1.1"><line x1="6.5" y1="0" x2="6.5" y2="1.8"/><line x1="6.5" y1="11.2" x2="6.5" y2="13"/><line x1="0" y1="6.5" x2="1.8" y2="6.5"/><line x1="11.2" y1="6.5" x2="13" y2="6.5"/><line x1="2" y1="2" x2="2.8" y2="2.8"/><line x1="10.2" y1="10.2" x2="11" y2="11"/><line x1="2" y1="11" x2="2.8" y2="10.2"/><line x1="10.2" y1="2.8" x2="11" y2="2"/></g></svg>
<svg class="a" style="left:405px;top:641px;" width="12" height="12" viewBox="0 0 12 12"><path d="M6.8,5 L6.8,2.6 A2.1,2.1 0 0 1 11,2.6 L11,4.5" fill="none" stroke="#ffd27a" stroke-width="1.1"/><rect x="0" y="5" width="9" height="7" fill="#ffd27a"/><rect x="4" y="7" width="1.1" height="2.8" fill="#333"/></svg>
<svg class="a" style="left:190px;top:662px;" width="14" height="7" viewBox="0 0 14 7"><polygon points="6,0.5 13.5,0.5 7.5,6.5 0,6.5" fill="#8fcdf5" stroke="#3d7fb5" stroke-width="0.6"/></svg>
<div class="t" style="left:209.10px;top:660.14px;font-size:12px;line-height:13.40px;color:#eceef0;transform:scaleX(0.9262);transform-origin:0 0;">C-ESMT-ROAD</div>
<svg class="a" style="left:370px;top:660px;" width="10" height="12" viewBox="0 0 10 12"><circle cx="4.7" cy="4.6" r="4.4" fill="#ffd27a"/><rect x="3.2" y="8" width="3" height="1.5" fill="#ffd27a"/><path d="M3.2,9.6 L6.2,9.6 L6.2,10.6 L4.7,11.8 L3.2,10.6 Z" fill="#f4f4f4"/></svg>
<svg class="a" style="left:386px;top:659px;" width="13" height="13" viewBox="0 0 13 13"><circle cx="6.5" cy="6.5" r="3.4" fill="#ffd27a"/><g stroke="#ffd27a" stroke-width="1.1"><line x1="6.5" y1="0" x2="6.5" y2="1.8"/><line x1="6.5" y1="11.2" x2="6.5" y2="13"/><line x1="0" y1="6.5" x2="1.8" y2="6.5"/><line x1="11.2" y1="6.5" x2="13" y2="6.5"/><line x1="2" y1="2" x2="2.8" y2="2.8"/><line x1="10.2" y1="10.2" x2="11" y2="11"/><line x1="2" y1="11" x2="2.8" y2="10.2"/><line x1="10.2" y1="2.8" x2="11" y2="2"/></g></svg>
<svg class="a" style="left:405px;top:659px;" width="12" height="12" viewBox="0 0 12 12"><path d="M6.8,5 L6.8,2.6 A2.1,2.1 0 0 1 11,2.6 L11,4.5" fill="none" stroke="#ffd27a" stroke-width="1.1"/><rect x="0" y="5" width="9" height="7" fill="#ffd27a"/><rect x="4" y="7" width="1.1" height="2.8" fill="#333"/></svg>
<svg class="a" style="left:190px;top:680px;" width="14" height="7" viewBox="0 0 14 7"><polygon points="6,0.5 13.5,0.5 7.5,6.5 0,6.5" fill="#8fcdf5" stroke="#3d7fb5" stroke-width="0.6"/></svg>
<div class="t" style="left:209.10px;top:678.14px;font-size:12px;line-height:13.40px;color:#eceef0;transform:scaleX(0.9120);transform-origin:0 0;">C-HYDR-CTCH</div>
<svg class="a" style="left:370px;top:678px;" width="10" height="12" viewBox="0 0 10 12"><circle cx="4.7" cy="4.6" r="4.4" fill="#ffd27a"/><rect x="3.2" y="8" width="3" height="1.5" fill="#ffd27a"/><path d="M3.2,9.6 L6.2,9.6 L6.2,10.6 L4.7,11.8 L3.2,10.6 Z" fill="#f4f4f4"/></svg>
<svg class="a" style="left:386px;top:677px;" width="13" height="13" viewBox="0 0 13 13"><circle cx="6.5" cy="6.5" r="3.4" fill="#ffd27a"/><g stroke="#ffd27a" stroke-width="1.1"><line x1="6.5" y1="0" x2="6.5" y2="1.8"/><line x1="6.5" y1="11.2" x2="6.5" y2="13"/><line x1="0" y1="6.5" x2="1.8" y2="6.5"/><line x1="11.2" y1="6.5" x2="13" y2="6.5"/><line x1="2" y1="2" x2="2.8" y2="2.8"/><line x1="10.2" y1="10.2" x2="11" y2="11"/><line x1="2" y1="11" x2="2.8" y2="10.2"/><line x1="10.2" y1="2.8" x2="11" y2="2"/></g></svg>
<svg class="a" style="left:405px;top:677px;" width="12" height="12" viewBox="0 0 12 12"><path d="M6.8,5 L6.8,2.6 A2.1,2.1 0 0 1 11,2.6 L11,4.5" fill="none" stroke="#ffd27a" stroke-width="1.1"/><rect x="0" y="5" width="9" height="7" fill="#ffd27a"/><rect x="4" y="7" width="1.1" height="2.8" fill="#333"/></svg>
<svg class="a" style="left:190px;top:698px;" width="14" height="7" viewBox="0 0 14 7"><polygon points="6,0.5 13.5,0.5 7.5,6.5 0,6.5" fill="#8fcdf5" stroke="#3d7fb5" stroke-width="0.6"/></svg>
<div class="t" style="left:209.10px;top:696.14px;font-size:12px;line-height:13.40px;color:#eceef0;transform:scaleX(0.9223);transform-origin:0 0;">C-HYDR-CTCH-BNDY</div>
<svg class="a" style="left:370px;top:696px;" width="10" height="12" viewBox="0 0 10 12"><circle cx="4.7" cy="4.6" r="4.4" fill="#ffd27a"/><rect x="3.2" y="8" width="3" height="1.5" fill="#ffd27a"/><path d="M3.2,9.6 L6.2,9.6 L6.2,10.6 L4.7,11.8 L3.2,10.6 Z" fill="#f4f4f4"/></svg>
<svg class="a" style="left:386px;top:695px;" width="13" height="13" viewBox="0 0 13 13"><circle cx="6.5" cy="6.5" r="3.4" fill="#ffd27a"/><g stroke="#ffd27a" stroke-width="1.1"><line x1="6.5" y1="0" x2="6.5" y2="1.8"/><line x1="6.5" y1="11.2" x2="6.5" y2="13"/><line x1="0" y1="6.5" x2="1.8" y2="6.5"/><line x1="11.2" y1="6.5" x2="13" y2="6.5"/><line x1="2" y1="2" x2="2.8" y2="2.8"/><line x1="10.2" y1="10.2" x2="11" y2="11"/><line x1="2" y1="11" x2="2.8" y2="10.2"/><line x1="10.2" y1="2.8" x2="11" y2="2"/></g></svg>
<svg class="a" style="left:405px;top:695px;" width="12" height="12" viewBox="0 0 12 12"><path d="M6.8,5 L6.8,2.6 A2.1,2.1 0 0 1 11,2.6 L11,4.5" fill="none" stroke="#ffd27a" stroke-width="1.1"/><rect x="0" y="5" width="9" height="7" fill="#ffd27a"/><rect x="4" y="7" width="1.1" height="2.8" fill="#333"/></svg>
<svg class="a" style="left:190px;top:716px;" width="14" height="7" viewBox="0 0 14 7"><polygon points="6,0.5 13.5,0.5 7.5,6.5 0,6.5" fill="#8fcdf5" stroke="#3d7fb5" stroke-width="0.6"/></svg>
<div class="t" style="left:209.10px;top:714.14px;font-size:12px;line-height:13.40px;color:#eceef0;transform:scaleX(0.9051);transform-origin:0 0;">C-HYDR-CTCH-DSPT</div>
<svg class="a" style="left:370px;top:714px;" width="10" height="12" viewBox="0 0 10 12"><circle cx="4.7" cy="4.6" r="4.4" fill="#ffd27a"/><rect x="3.2" y="8" width="3" height="1.5" fill="#ffd27a"/><path d="M3.2,9.6 L6.2,9.6 L6.2,10.6 L4.7,11.8 L3.2,10.6 Z" fill="#f4f4f4"/></svg>
<svg class="a" style="left:386px;top:713px;" width="13" height="13" viewBox="0 0 13 13"><circle cx="6.5" cy="6.5" r="3.4" fill="#ffd27a"/><g stroke="#ffd27a" stroke-width="1.1"><line x1="6.5" y1="0" x2="6.5" y2="1.8"/><line x1="6.5" y1="11.2" x2="6.5" y2="13"/><line x1="0" y1="6.5" x2="1.8" y2="6.5"/><line x1="11.2" y1="6.5" x2="13" y2="6.5"/><line x1="2" y1="2" x2="2.8" y2="2.8"/><line x1="10.2" y1="10.2" x2="11" y2="11"/><line x1="2" y1="11" x2="2.8" y2="10.2"/><line x1="10.2" y1="2.8" x2="11" y2="2"/></g></svg>
<svg class="a" style="left:405px;top:713px;" width="12" height="12" viewBox="0 0 12 12"><path d="M6.8,5 L6.8,2.6 A2.1,2.1 0 0 1 11,2.6 L11,4.5" fill="none" stroke="#ffd27a" stroke-width="1.1"/><rect x="0" y="5" width="9" height="7" fill="#ffd27a"/><rect x="4" y="7" width="1.1" height="2.8" fill="#333"/></svg>
<svg class="a" style="left:190px;top:734px;" width="14" height="7" viewBox="0 0 14 7"><polygon points="6,0.5 13.5,0.5 7.5,6.5 0,6.5" fill="#8fcdf5" stroke="#3d7fb5" stroke-width="0.6"/></svg>
<div class="t" style="left:209.10px;top:732.14px;font-size:12px;line-height:13.40px;color:#eceef0;transform:scaleX(0.9161);transform-origin:0 0;">C-HYDR-CTCH-FPTH</div>
<svg class="a" style="left:370px;top:732px;" width="10" height="12" viewBox="0 0 10 12"><circle cx="4.7" cy="4.6" r="4.4" fill="#ffd27a"/><rect x="3.2" y="8" width="3" height="1.5" fill="#ffd27a"/><path d="M3.2,9.6 L6.2,9.6 L6.2,10.6 L4.7,11.8 L3.2,10.6 Z" fill="#f4f4f4"/></svg>
<svg class="a" style="left:386px;top:731px;" width="13" height="13" viewBox="0 0 13 13"><circle cx="6.5" cy="6.5" r="3.4" fill="#ffd27a"/><g stroke="#ffd27a" stroke-width="1.1"><line x1="6.5" y1="0" x2="6.5" y2="1.8"/><line x1="6.5" y1="11.2" x2="6.5" y2="13"/><line x1="0" y1="6.5" x2="1.8" y2="6.5"/><line x1="11.2" y1="6.5" x2="13" y2="6.5"/><line x1="2" y1="2" x2="2.8" y2="2.8"/><line x1="10.2" y1="10.2" x2="11" y2="11"/><line x1="2" y1="11" x2="2.8" y2="10.2"/><line x1="10.2" y1="2.8" x2="11" y2="2"/></g></svg>
<svg class="a" style="left:405px;top:731px;" width="12" height="12" viewBox="0 0 12 12"><path d="M6.8,5 L6.8,2.6 A2.1,2.1 0 0 1 11,2.6 L11,4.5" fill="none" stroke="#ffd27a" stroke-width="1.1"/><rect x="0" y="5" width="9" height="7" fill="#ffd27a"/><rect x="4" y="7" width="1.1" height="2.8" fill="#333"/></svg>
<svg class="a" style="left:190px;top:752px;" width="14" height="7" viewBox="0 0 14 7"><polygon points="6,0.5 13.5,0.5 7.5,6.5 0,6.5" fill="#8fcdf5" stroke="#3d7fb5" stroke-width="0.6"/></svg>
<div class="t" style="left:209.10px;top:750.14px;font-size:12px;line-height:13.40px;color:#eceef0;transform:scaleX(0.9060);transform-origin:0 0;">C-HYDR-CTCH-FPTH-TEXT</div>
<svg class="a" style="left:370px;top:750px;" width="10" height="12" viewBox="0 0 10 12"><circle cx="4.7" cy="4.6" r="4.4" fill="#ffd27a"/><rect x="3.2" y="8" width="3" height="1.5" fill="#ffd27a"/><path d="M3.2,9.6 L6.2,9.6 L6.2,10.6 L4.7,11.8 L3.2,10.6 Z" fill="#f4f4f4"/></svg>
<svg class="a" style="left:386px;top:749px;" width="13" height="13" viewBox="0 0 13 13"><circle cx="6.5" cy="6.5" r="3.4" fill="#ffd27a"/><g stroke="#ffd27a" stroke-width="1.1"><line x1="6.5" y1="0" x2="6.5" y2="1.8"/><line x1="6.5" y1="11.2" x2="6.5" y2="13"/><line x1="0" y1="6.5" x2="1.8" y2="6.5"/><line x1="11.2" y1="6.5" x2="13" y2="6.5"/><line x1="2" y1="2" x2="2.8" y2="2.8"/><line x1="10.2" y1="10.2" x2="11" y2="11"/><line x1="2" y1="11" x2="2.8" y2="10.2"/><line x1="10.2" y1="2.8" x2="11" y2="2"/></g></svg>
<svg class="a" style="left:405px;top:749px;" width="12" height="12" viewBox="0 0 12 12"><path d="M6.8,5 L6.8,2.6 A2.1,2.1 0 0 1 11,2.6 L11,4.5" fill="none" stroke="#ffd27a" stroke-width="1.1"/><rect x="0" y="5" width="9" height="7" fill="#ffd27a"/><rect x="4" y="7" width="1.1" height="2.8" fill="#333"/></svg>
<svg class="a" style="left:190px;top:770px;" width="14" height="7" viewBox="0 0 14 7"><polygon points="6,0.5 13.5,0.5 7.5,6.5 0,6.5" fill="#8fcdf5" stroke="#3d7fb5" stroke-width="0.6"/></svg>
<div class="t" style="left:209.10px;top:768.14px;font-size:12px;line-height:13.40px;color:#eceef0;transform:scaleX(0.9001);transform-origin:0 0;">C-HYDR-CTCH-FSPT</div>
<svg class="a" style="left:370px;top:768px;" width="10" height="12" viewBox="0 0 10 12"><circle cx="4.7" cy="4.6" r="4.4" fill="#ffd27a"/><rect x="3.2" y="8" width="3" height="1.5" fill="#ffd27a"/><path d="M3.2,9.6 L6.2,9.6 L6.2,10.6 L4.7,11.8 L3.2,10.6 Z" fill="#f4f4f4"/></svg>
<svg class="a" style="left:386px;top:767px;" width="13" height="13" viewBox="0 0 13 13"><circle cx="6.5" cy="6.5" r="3.4" fill="#ffd27a"/><g stroke="#ffd27a" stroke-width="1.1"><line x1="6.5" y1="0" x2="6.5" y2="1.8"/><line x1="6.5" y1="11.2" x2="6.5" y2="13"/><line x1="0" y1="6.5" x2="1.8" y2="6.5"/><line x1="11.2" y1="6.5" x2="13" y2="6.5"/><line x1="2" y1="2" x2="2.8" y2="2.8"/><line x1="10.2" y1="10.2" x2="11" y2="11"/><line x1="2" y1="11" x2="2.8" y2="10.2"/><line x1="10.2" y1="2.8" x2="11" y2="2"/></g></svg>
<svg class="a" style="left:405px;top:767px;" width="12" height="12" viewBox="0 0 12 12"><path d="M6.8,5 L6.8,2.6 A2.1,2.1 0 0 1 11,2.6 L11,4.5" fill="none" stroke="#ffd27a" stroke-width="1.1"/><rect x="0" y="5" width="9" height="7" fill="#ffd27a"/><rect x="4" y="7" width="1.1" height="2.8" fill="#333"/></svg>
<svg class="a" style="left:190px;top:788px;" width="14" height="7" viewBox="0 0 14 7"><polygon points="6,0.5 13.5,0.5 7.5,6.5 0,6.5" fill="#8fcdf5" stroke="#3d7fb5" stroke-width="0.6"/></svg>
<div class="t" style="left:209.10px;top:786.14px;font-size:12px;line-height:13.40px;color:#eceef0;transform:scaleX(0.9275);transform-origin:0 0;">C-HYDR-CTCH-HDPT</div>
<svg class="a" style="left:370px;top:786px;" width="10" height="12" viewBox="0 0 10 12"><circle cx="4.7" cy="4.6" r="4.4" fill="#ffd27a"/><rect x="3.2" y="8" width="3" height="1.5" fill="#ffd27a"/><path d="M3.2,9.6 L6.2,9.6 L6.2,10.6 L4.7,11.8 L3.2,10.6 Z" fill="#f4f4f4"/></svg>
<svg class="a" style="left:386px;top:785px;" width="13" height="13" viewBox="0 0 13 13"><circle cx="6.5" cy="6.5" r="3.4" fill="#ffd27a"/><g stroke="#ffd27a" stroke-width="1.1"><line x1="6.5" y1="0" x2="6.5" y2="1.8"/><line x1="6.5" y1="11.2" x2="6.5" y2="13"/><line x1="0" y1="6.5" x2="1.8" y2="6.5"/><line x1="11.2" y1="6.5" x2="13" y2="6.5"/><line x1="2" y1="2" x2="2.8" y2="2.8"/><line x1="10.2" y1="10.2" x2="11" y2="11"/><line x1="2" y1="11" x2="2.8" y2="10.2"/><line x1="10.2" y1="2.8" x2="11" y2="2"/></g></svg>
<svg class="a" style="left:405px;top:785px;" width="12" height="12" viewBox="0 0 12 12"><path d="M6.8,5 L6.8,2.6 A2.1,2.1 0 0 1 11,2.6 L11,4.5" fill="none" stroke="#ffd27a" stroke-width="1.1"/><rect x="0" y="5" width="9" height="7" fill="#ffd27a"/><rect x="4" y="7" width="1.1" height="2.8" fill="#333"/></svg>
<svg class="a" style="left:190px;top:806px;" width="14" height="7" viewBox="0 0 14 7"><polygon points="6,0.5 13.5,0.5 7.5,6.5 0,6.5" fill="#8fcdf5" stroke="#3d7fb5" stroke-width="0.6"/></svg>
<div class="t" style="left:209.10px;top:804.14px;font-size:12px;line-height:13.40px;color:#eceef0;transform:scaleX(0.8984);transform-origin:0 0;">C-HYDR-CTCH-TEXT</div>
<svg class="a" style="left:370px;top:804px;" width="10" height="12" viewBox="0 0 10 12"><circle cx="4.7" cy="4.6" r="4.4" fill="#ffd27a"/><rect x="3.2" y="8" width="3" height="1.5" fill="#ffd27a"/><path d="M3.2,9.6 L6.2,9.6 L6.2,10.6 L4.7,11.8 L3.2,10.6 Z" fill="#f4f4f4"/></svg>
<svg class="a" style="left:386px;top:803px;" width="13" height="13" viewBox="0 0 13 13"><circle cx="6.5" cy="6.5" r="3.4" fill="#ffd27a"/><g stroke="#ffd27a" stroke-width="1.1"><line x1="6.5" y1="0" x2="6.5" y2="1.8"/><line x1="6.5" y1="11.2" x2="6.5" y2="13"/><line x1="0" y1="6.5" x2="1.8" y2="6.5"/><line x1="11.2" y1="6.5" x2="13" y2="6.5"/><line x1="2" y1="2" x2="2.8" y2="2.8"/><line x1="10.2" y1="10.2" x2="11" y2="11"/><line x1="2" y1="11" x2="2.8" y2="10.2"/><line x1="10.2" y1="2.8" x2="11" y2="2"/></g></svg>
<svg class="a" style="left:405px;top:803px;" width="12" height="12" viewBox="0 0 12 12"><path d="M6.8,5 L6.8,2.6 A2.1,2.1 0 0 1 11,2.6 L11,4.5" fill="none" stroke="#ffd27a" stroke-width="1.1"/><rect x="0" y="5" width="9" height="7" fill="#ffd27a"/><rect x="4" y="7" width="1.1" height="2.8" fill="#333"/></svg>
<svg class="a" style="left:190px;top:824px;" width="14" height="7" viewBox="0 0 14 7"><polygon points="6,0.5 13.5,0.5 7.5,6.5 0,6.5" fill="#8fcdf5" stroke="#3d7fb5" stroke-width="0.6"/></svg>
<div class="t" style="left:209.10px;top:822.14px;font-size:12px;line-height:13.40px;color:#eceef0;transform:scaleX(0.8939);transform-origin:0 0;">C-HYDR-TEXT</div>
<svg class="a" style="left:370px;top:822px;" width="10" height="12" viewBox="0 0 10 12"><circle cx="4.7" cy="4.6" r="4.4" fill="#ffd27a"/><rect x="3.2" y="8" width="3" height="1.5" fill="#ffd27a"/><path d="M3.2,9.6 L6.2,9.6 L6.2,10.6 L4.7,11.8 L3.2,10.6 Z" fill="#f4f4f4"/></svg>
<svg class="a" style="left:386px;top:821px;" width="13" height="13" viewBox="0 0 13 13"><circle cx="6.5" cy="6.5" r="3.4" fill="#ffd27a"/><g stroke="#ffd27a" stroke-width="1.1"><line x1="6.5" y1="0" x2="6.5" y2="1.8"/><line x1="6.5" y1="11.2" x2="6.5" y2="13"/><line x1="0" y1="6.5" x2="1.8" y2="6.5"/><line x1="11.2" y1="6.5" x2="13" y2="6.5"/><line x1="2" y1="2" x2="2.8" y2="2.8"/><line x1="10.2" y1="10.2" x2="11" y2="11"/><line x1="2" y1="11" x2="2.8" y2="10.2"/><line x1="10.2" y1="2.8" x2="11" y2="2"/></g></svg>
<svg class="a" style="left:405px;top:821px;" width="12" height="12" viewBox="0 0 12 12"><path d="M6.8,5 L6.8,2.6 A2.1,2.1 0 0 1 11,2.6 L11,4.5" fill="none" stroke="#ffd27a" stroke-width="1.1"/><rect x="0" y="5" width="9" height="7" fill="#ffd27a"/><rect x="4" y="7" width="1.1" height="2.8" fill="#333"/></svg>
<svg class="a" style="left:190px;top:842px;" width="14" height="7" viewBox="0 0 14 7"><polygon points="6,0.5 13.5,0.5 7.5,6.5 0,6.5" fill="#8fcdf5" stroke="#3d7fb5" stroke-width="0.6"/></svg>
<div class="t" style="left:209.10px;top:840.14px;font-size:12px;line-height:13.40px;color:#eceef0;transform:scaleX(0.9178);transform-origin:0 0;">C-PROP-BNDY</div>
<svg class="a" style="left:370px;top:840px;" width="10" height="12" viewBox="0 0 10 12"><circle cx="4.7" cy="4.6" r="4.4" fill="#ffd27a"/><rect x="3.2" y="8" width="3" height="1.5" fill="#ffd27a"/><path d="M3.2,9.6 L6.2,9.6 L6.2,10.6 L4.7,11.8 L3.2,10.6 Z" fill="#f4f4f4"/></svg>
<svg class="a" style="left:386px;top:839px;" width="13" height="13" viewBox="0 0 13 13"><circle cx="6.5" cy="6.5" r="3.4" fill="#ffd27a"/><g stroke="#ffd27a" stroke-width="1.1"><line x1="6.5" y1="0" x2="6.5" y2="1.8"/><line x1="6.5" y1="11.2" x2="6.5" y2="13"/><line x1="0" y1="6.5" x2="1.8" y2="6.5"/><line x1="11.2" y1="6.5" x2="13" y2="6.5"/><line x1="2" y1="2" x2="2.8" y2="2.8"/><line x1="10.2" y1="10.2" x2="11" y2="11"/><line x1="2" y1="11" x2="2.8" y2="10.2"/><line x1="10.2" y1="2.8" x2="11" y2="2"/></g></svg>
<svg class="a" style="left:405px;top:839px;" width="12" height="12" viewBox="0 0 12 12"><path d="M6.8,5 L6.8,2.6 A2.1,2.1 0 0 1 11,2.6 L11,4.5" fill="none" stroke="#ffd27a" stroke-width="1.1"/><rect x="0" y="5" width="9" height="7" fill="#ffd27a"/><rect x="4" y="7" width="1.1" height="2.8" fill="#333"/></svg>
<svg class="a" style="left:190px;top:860px;" width="14" height="7" viewBox="0 0 14 7"><polygon points="6,0.5 13.5,0.5 7.5,6.5 0,6.5" fill="#8fcdf5" stroke="#3d7fb5" stroke-width="0.6"/></svg>
<div class="t" style="left:209.10px;top:858.14px;font-size:12px;line-height:13.40px;color:#eceef0;transform:scaleX(0.9175);transform-origin:0 0;">C-PROP-BRNG</div>
<svg class="a" style="left:370px;top:858px;" width="10" height="12" viewBox="0 0 10 12"><circle cx="4.7" cy="4.6" r="4.4" fill="#ffd27a"/><rect x="3.2" y="8" width="3" height="1.5" fill="#ffd27a"/><path d="M3.2,9.6 L6.2,9.6 L6.2,10.6 L4.7,11.8 L3.2,10.6 Z" fill="#f4f4f4"/></svg>
<svg class="a" style="left:386px;top:857px;" width="13" height="13" viewBox="0 0 13 13"><circle cx="6.5" cy="6.5" r="3.4" fill="#ffd27a"/><g stroke="#ffd27a" stroke-width="1.1"><line x1="6.5" y1="0" x2="6.5" y2="1.8"/><line x1="6.5" y1="11.2" x2="6.5" y2="13"/><line x1="0" y1="6.5" x2="1.8" y2="6.5"/><line x1="11.2" y1="6.5" x2="13" y2="6.5"/><line x1="2" y1="2" x2="2.8" y2="2.8"/><line x1="10.2" y1="10.2" x2="11" y2="11"/><line x1="2" y1="11" x2="2.8" y2="10.2"/><line x1="10.2" y1="2.8" x2="11" y2="2"/></g></svg>
<svg class="a" style="left:405px;top:857px;" width="12" height="12" viewBox="0 0 12 12"><path d="M6.8,5 L6.8,2.6 A2.1,2.1 0 0 1 11,2.6 L11,4.5" fill="none" stroke="#ffd27a" stroke-width="1.1"/><rect x="0" y="5" width="9" height="7" fill="#ffd27a"/><rect x="4" y="7" width="1.1" height="2.8" fill="#333"/></svg>
<svg class="a" style="left:190px;top:878px;" width="14" height="7" viewBox="0 0 14 7"><polygon points="6,0.5 13.5,0.5 7.5,6.5 0,6.5" fill="#8fcdf5" stroke="#3d7fb5" stroke-width="0.6"/></svg>
<div class="t" style="left:209.10px;top:876.14px;font-size:12px;line-height:13.40px;color:#eceef0;transform:scaleX(0.9154);transform-origin:0 0;">C-PROP-LINE</div>
<svg class="a" style="left:370px;top:876px;" width="10" height="12" viewBox="0 0 10 12"><circle cx="4.7" cy="4.6" r="4.4" fill="#ffd27a"/><rect x="3.2" y="8" width="3" height="1.5" fill="#ffd27a"/><path d="M3.2,9.6 L6.2,9.6 L6.2,10.6 L4.7,11.8 L3.2,10.6 Z" fill="#f4f4f4"/></svg>
<svg class="a" style="left:386px;top:875px;" width="13" height="13" viewBox="0 0 13 13"><circle cx="6.5" cy="6.5" r="3.4" fill="#ffd27a"/><g stroke="#ffd27a" stroke-width="1.1"><line x1="6.5" y1="0" x2="6.5" y2="1.8"/><line x1="6.5" y1="11.2" x2="6.5" y2="13"/><line x1="0" y1="6.5" x2="1.8" y2="6.5"/><line x1="11.2" y1="6.5" x2="13" y2="6.5"/><line x1="2" y1="2" x2="2.8" y2="2.8"/><line x1="10.2" y1="10.2" x2="11" y2="11"/><line x1="2" y1="11" x2="2.8" y2="10.2"/><line x1="10.2" y1="2.8" x2="11" y2="2"/></g></svg>
<svg class="a" style="left:405px;top:875px;" width="12" height="12" viewBox="0 0 12 12"><path d="M6.8,5 L6.8,2.6 A2.1,2.1 0 0 1 11,2.6 L11,4.5" fill="none" stroke="#ffd27a" stroke-width="1.1"/><rect x="0" y="5" width="9" height="7" fill="#ffd27a"/><rect x="4" y="7" width="1.1" height="2.8" fill="#333"/></svg>
<svg class="a" style="left:190px;top:896px;" width="14" height="7" viewBox="0 0 14 7"><polygon points="6,0.5 13.5,0.5 7.5,6.5 0,6.5" fill="#8fcdf5" stroke="#3d7fb5" stroke-width="0.6"/></svg>
<div class="t" style="left:209.10px;top:894.14px;font-size:12px;line-height:13.40px;color:#eceef0;transform:scaleX(0.8991);transform-origin:0 0;">C-PROP-LINE-TEXT</div>
<svg class="a" style="left:370px;top:894px;" width="10" height="12" viewBox="0 0 10 12"><circle cx="4.7" cy="4.6" r="4.4" fill="#ffd27a"/><rect x="3.2" y="8" width="3" height="1.5" fill="#ffd27a"/><path d="M3.2,9.6 L6.2,9.6 L6.2,10.6 L4.7,11.8 L3.2,10.6 Z" fill="#f4f4f4"/></svg>
<svg class="a" style="left:386px;top:893px;" width="13" height="13" viewBox="0 0 13 13"><circle cx="6.5" cy="6.5" r="3.4" fill="#ffd27a"/><g stroke="#ffd27a" stroke-width="1.1"><line x1="6.5" y1="0" x2="6.5" y2="1.8"/><line x1="6.5" y1="11.2" x2="6.5" y2="13"/><line x1="0" y1="6.5" x2="1.8" y2="6.5"/><line x1="11.2" y1="6.5" x2="13" y2="6.5"/><line x1="2" y1="2" x2="2.8" y2="2.8"/><line x1="10.2" y1="10.2" x2="11" y2="11"/><line x1="2" y1="11" x2="2.8" y2="10.2"/><line x1="10.2" y1="2.8" x2="11" y2="2"/></g></svg>
<svg class="a" style="left:405px;top:893px;" width="12" height="12" viewBox="0 0 12 12"><path d="M6.8,5 L6.8,2.6 A2.1,2.1 0 0 1 11,2.6 L11,4.5" fill="none" stroke="#ffd27a" stroke-width="1.1"/><rect x="0" y="5" width="9" height="7" fill="#ffd27a"/><rect x="4" y="7" width="1.1" height="2.8" fill="#333"/></svg>
<svg class="a" style="left:190px;top:914px;" width="14" height="7" viewBox="0 0 14 7"><polygon points="6,0.5 13.5,0.5 7.5,6.5 0,6.5" fill="#8fcdf5" stroke="#3d7fb5" stroke-width="0.6"/></svg>
<div class="t" style="left:209.10px;top:912.14px;font-size:12px;line-height:13.40px;color:#eceef0;transform:scaleX(0.9011);transform-origin:0 0;">C-PROP-LOTS</div>
<svg class="a" style="left:370px;top:912px;" width="10" height="12" viewBox="0 0 10 12"><circle cx="4.7" cy="4.6" r="4.4" fill="#ffd27a"/><rect x="3.2" y="8" width="3" height="1.5" fill="#ffd27a"/><path d="M3.2,9.6 L6.2,9.6 L6.2,10.6 L4.7,11.8 L3.2,10.6 Z" fill="#f4f4f4"/></svg>
<svg class="a" style="left:386px;top:911px;" width="13" height="13" viewBox="0 0 13 13"><circle cx="6.5" cy="6.5" r="3.4" fill="#ffd27a"/><g stroke="#ffd27a" stroke-width="1.1"><line x1="6.5" y1="0" x2="6.5" y2="1.8"/><line x1="6.5" y1="11.2" x2="6.5" y2="13"/><line x1="0" y1="6.5" x2="1.8" y2="6.5"/><line x1="11.2" y1="6.5" x2="13" y2="6.5"/><line x1="2" y1="2" x2="2.8" y2="2.8"/><line x1="10.2" y1="10.2" x2="11" y2="11"/><line x1="2" y1="11" x2="2.8" y2="10.2"/><line x1="10.2" y1="2.8" x2="11" y2="2"/></g></svg>
<svg class="a" style="left:405px;top:911px;" width="12" height="12" viewBox="0 0 12 12"><path d="M6.8,5 L6.8,2.6 A2.1,2.1 0 0 1 11,2.6 L11,4.5" fill="none" stroke="#ffd27a" stroke-width="1.1"/><rect x="0" y="5" width="9" height="7" fill="#ffd27a"/><rect x="4" y="7" width="1.1" height="2.8" fill="#333"/></svg>
<svg class="a" style="left:190px;top:932px;" width="14" height="7" viewBox="0 0 14 7"><polygon points="6,0.5 13.5,0.5 7.5,6.5 0,6.5" fill="#8fcdf5" stroke="#3d7fb5" stroke-width="0.6"/></svg>
<div class="t" style="left:209.10px;top:930.14px;font-size:12px;line-height:13.40px;color:#eceef0;transform:scaleX(0.9252);transform-origin:0 0;">C-PROP-PATT</div>
<svg class="a" style="left:370px;top:930px;" width="10" height="12" viewBox="0 0 10 12"><circle cx="4.7" cy="4.6" r="4.4" fill="#ffd27a"/><rect x="3.2" y="8" width="3" height="1.5" fill="#ffd27a"/><path d="M3.2,9.6 L6.2,9.6 L6.2,10.6 L4.7,11.8 L3.2,10.6 Z" fill="#f4f4f4"/></svg>
<svg class="a" style="left:386px;top:929px;" width="13" height="13" viewBox="0 0 13 13"><circle cx="6.5" cy="6.5" r="3.4" fill="#ffd27a"/><g stroke="#ffd27a" stroke-width="1.1"><line x1="6.5" y1="0" x2="6.5" y2="1.8"/><line x1="6.5" y1="11.2" x2="6.5" y2="13"/><line x1="0" y1="6.5" x2="1.8" y2="6.5"/><line x1="11.2" y1="6.5" x2="13" y2="6.5"/><line x1="2" y1="2" x2="2.8" y2="2.8"/><line x1="10.2" y1="10.2" x2="11" y2="11"/><line x1="2" y1="11" x2="2.8" y2="10.2"/><line x1="10.2" y1="2.8" x2="11" y2="2"/></g></svg>
<svg class="a" style="left:405px;top:929px;" width="12" height="12" viewBox="0 0 12 12"><path d="M6.8,5 L6.8,2.6 A2.1,2.1 0 0 1 11,2.6 L11,4.5" fill="none" stroke="#ffd27a" stroke-width="1.1"/><rect x="0" y="5" width="9" height="7" fill="#ffd27a"/><rect x="4" y="7" width="1.1" height="2.8" fill="#333"/></svg>
<div class="a" style="left:1px;top:996px;width:435px;height:1px;background:#2e3540;"></div>
<div class="t" style="left:4.00px;top:978.64px;font-size:12px;line-height:13.40px;color:#eceef0;transform:scaleX(0.9629);transform-origin:0 0;">All: 265 layers displayed of 265 total layers</div>
<div class="a" style="left:440px;top:144px;width:1448px;height:855px;background:#212830;"></div>
<div class="t" style="left:444.70px;top:150.69px;font-size:12.5px;line-height:13.96px;color:#dfe1e4;transform:scaleX(0.9450);transform-origin:0 0;">[&minus;][Custom View][Shaded (Fast)]</div>
<div class="a" style="left:1829px;top:157.5px;width:10px;height:3px;background:#eeeeee;"></div>
<svg class="a" style="left:1849px;top:154px;" width="11" height="10" viewBox="0 0 11 10"><rect x="1" y="3" width="7" height="6" fill="none" stroke="#eee" stroke-width="2"/><path d="M4,2 L4,1 L10,1 L10,6 L9,6" fill="none" stroke="#eee" stroke-width="1.6"/></svg>
<svg class="a" style="left:1869px;top:154px;" width="10" height="10" viewBox="0 0 10 10"><path d="M1,1 L9,9 M9,1 L1,9" stroke="#f0f0f0" stroke-width="2.2"/></svg>
<svg class="a" style="left:0px;top:0px;left:0;top:0;" width="1919" height="1029" viewBox="0 0 1919 1029"><defs><linearGradient id="sh" x1="0" x2="1" y1="0" y2="0">
      <stop offset="0" stop-color="#fff" stop-opacity="0.0"/>
      <stop offset="0.1" stop-color="#fff" stop-opacity="0.06"/>
      <stop offset="0.22" stop-color="#fff" stop-opacity="0.03"/>
      <stop offset="0.32" stop-color="#000" stop-opacity="0.08"/>
      <stop offset="0.62" stop-color="#000" stop-opacity="0.1"/>
      <stop offset="0.74" stop-color="#fff" stop-opacity="0.05"/>
      <stop offset="0.86" stop-color="#fff" stop-opacity="0.07"/>
      <stop offset="0.94" stop-color="#000" stop-opacity="0.03"/>
      <stop offset="1" stop-color="#000" stop-opacity="0.04"/></linearGradient></defs><path d="M1050.0,225 L1050.0,338 A24.5,13.5 0 0 0 1099.0,338 L1099.0,225 A24.5,13.5 0 0 1 1050.0,225 Z" fill="#ac590a"/><path d="M1050.0,338 L1050.0,352 A24.5,13.5 0 0 0 1099.0,352 L1099.0,338 A24.5,13.5 0 0 1 1050.0,338 Z" fill="#a0129a"/><path d="M1050.0,352 L1050.0,402 A24.5,13.5 0 0 0 1099.0,402 L1099.0,352 A24.5,13.5 0 0 1 1050.0,352 Z" fill="#a09752"/><path d="M1050.0,402 L1050.0,482 A24.5,13.5 0 0 0 1099.0,482 L1099.0,402 A24.5,13.5 0 0 1 1050.0,402 Z" fill="#539b6c"/><path d="M1050.0,482 L1050.0,514 A24.5,13.5 0 0 0 1099.0,514 L1099.0,482 A24.5,13.5 0 0 1 1050.0,482 Z" fill="#a4560a"/><path d="M1050.0,514 L1050.0,573 A24.5,13.5 0 0 0 1099.0,573 L1099.0,514 A24.5,13.5 0 0 1 1050.0,514 Z" fill="#a09752"/><path d="M1050.0,573 L1050.0,823 A24.5,13.5 0 0 0 1099.0,823 L1099.0,573 A24.5,13.5 0 0 1 1050.0,573 Z" fill="#0f9595"/><path d="M1050.0,225 L1050.0,823 A24.5,13.5 0 0 0 1099.0,823 L1099.0,225 A24.5,13.5 0 0 1 1050.0,225 Z" fill="url(#sh)"/><ellipse cx="1074.5" cy="225" rx="24.5" ry="13" fill="#c26a12"/><path d="M1063,224 L1075,220 L1077,231 Z" fill="#7c7418"/><path d="M1076,219 L1086,226 L1078,233 Z" fill="#7c7418"/><circle cx="1074.5" cy="234" r="0.8" fill="#7c7418"/></svg>
<svg class="a" style="left:0px;top:0px;left:0;top:0;" width="1919" height="1029" viewBox="0 0 1919 1029"><g transform="matrix(1.1081 0.3082 -0.6160 0.7880 1122 225)" fill="#ffa03a" stroke="#ffa03a" stroke-width="0.12" font-family="Liberation Sans" font-size="7.2"><text x="0.00 6.40 12.01 18.95 24.55 28.80 31.16 37.29 43.70 49.30 54.90 61.30 65.56 71.96 78.10 83.96 89.56 95.16 101.57 107.97 113.57 117.56 123.16 128.76 133.01" y="0.00" xml:space="preserve">Name: BH12H/CPT12HHeight:</text><text x="0.00 5.60 9.85 15.45 21.05" y="8.85" xml:space="preserve">1.50m</text><text x="0.00 6.40 12.01 17.61 21.86 27.46 29.81 35.14 39.40 45.00 49.52 53.77 58.02 60.38 65.98 71.58 77.18 82.78 87.03 92.63 98.23 105.17 109.43 111.78 117.38 122.98 128.58" y="17.70" xml:space="preserve">Depth start: 1833.98m, end:</text><text x="0.00 5.60 11.20 16.80 22.40 26.65 32.25 37.85" y="26.55" xml:space="preserve">1832.48m</text><text x="0.00 6.94 12.54 16.79 22.39 26.91 30.90 36.50 40.48 44.73 47.09 52.42 56.67 62.00 66.25 68.61 75.01 80.61 86.75 92.89 97.14 99.50 104.83 108.81 112.79 117.04 122.37 126.63 128.98 134.31 139.91 144.43" y="35.40" xml:space="preserve">Material: c:c: CLAY, silty, very</text><text x="0.00 5.33 10.93 15.18 19.43 23.69 26.04 31.64 37.24 41.76 47.09 49.45 55.05 59.57 65.17" y="44.25" xml:space="preserve">soft, dark grey</text><text x="0.00 5.74 8.09 10.45 16.85 22.45 28.59 30.95 36.55 42.15 47.75 53.35" y="53.10" xml:space="preserve">~  H2S odour</text></g><g transform="matrix(1.1081 0.3082 -0.6160 0.7880 1122 279)" fill="#ffa03a" stroke="#ffa03a" stroke-width="0.12" font-family="Liberation Sans" font-size="7.2"><text x="0.00 6.40 12.01 18.95 24.55 28.80 31.16 37.29 43.70 49.30 54.90 61.30 65.56 71.96 78.10 83.96 89.56 95.16 101.57 107.97 113.57 117.56 123.16 128.76 133.01" y="0.00" xml:space="preserve">Name: BH12H/CPT12HHeight:</text><text x="0.00 5.60 9.85 15.45 21.05" y="8.85" xml:space="preserve">9.70m</text><text x="0.00 6.40 12.01 17.61 21.86 27.46 29.81 35.14 39.40 45.00 49.52 53.77 58.02 60.38 65.98 71.58 77.18 82.78 87.03 92.63 98.23 105.17 109.43 111.78 117.38 122.98 128.58" y="17.70" xml:space="preserve">Depth start: 1832.48m, end:</text><text x="0.00 5.60 11.20 16.80 22.40 26.65 32.25 37.85" y="26.55" xml:space="preserve">1822.78m</text><text x="0.00 6.94 12.54 16.79 22.39 26.91 30.90 36.50 40.48 44.73 47.09 52.42 56.67 62.00 66.25 68.61 75.01 80.61 86.75 92.89 97.14 99.50 104.83 110.43 114.68 118.93" y="35.40" xml:space="preserve">Material: c:c: CLAY, soft,</text><text x="0.00 5.60 10.12 15.72 21.05 25.03 30.36 35.96 38.32 43.92 48.44 54.04 60.44" y="44.25" xml:space="preserve">greyish brown</text><text x="0.00 5.74 8.09 10.45 16.05 21.38 26.71 32.31 37.64 41.62 47.22 52.82 58.42 62.40 66.39 71.71 74.07 79.67 85.27 90.60 95.93 101.53 105.78 111.11 113.47 119.07 123.32 125.68 131.00 134.99 138.97" y="53.10" xml:space="preserve">~  occasionally pockets of silt</text></g><g transform="matrix(1.1081 0.3082 -0.6160 0.7880 1117 342)" fill="#f044e0" stroke="#f044e0" stroke-width="0.12" font-family="Liberation Sans" font-size="7.2"><text x="0.00 6.40 12.01 18.95 24.55 28.80 31.16 37.29 43.70 49.30 54.90 61.30 65.56 71.96 78.10 83.96 89.56 95.16 101.57 107.97 113.57 117.56 123.16 128.76 133.01" y="0.00" xml:space="preserve">Name: BH12H/CPT12HHeight:</text><text x="0.00 5.60 9.85 15.45 21.05" y="8.85" xml:space="preserve">1.50m</text><text x="0.00 6.40 12.01 17.61 21.86 27.46 29.81 35.14 39.40 45.00 49.52 53.77 58.02 60.38 65.98 71.58 77.18 82.78 87.03 92.63 98.23 105.17 109.43 111.78 117.38 122.98 128.58" y="17.70" xml:space="preserve">Depth start: 1822.78m, end:</text><text x="0.00 5.60 11.20 16.80 22.40 26.65 32.25 37.85" y="26.55" xml:space="preserve">1821.28m</text><text x="0.00 6.94 12.54 16.79 22.39 26.91 30.90 36.50 40.48 44.73 47.09 54.03 58.28 65.22 69.48 71.83 77.43 81.95 87.55 92.88 95.24 101.38 105.63 111.23" y="35.40" xml:space="preserve">Material: m:m: grey SILT</text></g><g transform="matrix(1.1081 0.3082 -0.6160 0.7880 1120 370)" fill="#fafa96" stroke="#fafa96" stroke-width="0.12" font-family="Liberation Sans" font-size="7.2"><text x="0.00 6.40 12.01 18.95 24.55 28.80 31.16 37.29 43.70 49.30 54.90 61.30 65.56 71.96 78.10 83.96 89.56 95.16 101.57 107.97 113.57 117.56 123.16 128.76 133.01" y="0.00" xml:space="preserve">Name: BH12H/CPT12HHeight:</text><text x="0.00 5.60 9.85 15.45 21.05" y="8.85" xml:space="preserve">5.10m</text><text x="0.00 6.40 12.01 17.61 21.86 27.46 29.81 35.14 39.40 45.00 49.52 53.77 58.02 60.38 65.98 71.58 77.18 82.78 87.03 92.63 98.23 105.17 109.43 111.78 117.38 122.98 128.58" y="17.70" xml:space="preserve">Depth start: 1821.28m, end:</text><text x="0.00 5.60 11.20 16.80 22.40 26.65 32.25 37.85" y="26.55" xml:space="preserve">1816.18m</text><text x="0.00 6.94 12.54 16.79 22.39 26.91 30.90 36.50 40.48 44.73 47.09 52.42 56.94 61.19 65.71 69.96 75.29 79.81 84.06 88.58 92.83 95.19 100.52 106.12 110.64 115.97 118.33 123.93 129.53 135.13 140.45" y="35.40" xml:space="preserve">Material: s(f):s(f): very dense</text><text x="0.00 5.60 10.12 15.72 21.32 26.92 30.90 36.23 41.83 44.19 49.79 54.31 59.91 65.24 67.59 72.92 76.91 80.89 85.14 90.47 92.83 97.08 101.06 106.66 112.26 114.62 120.76 126.90 133.30" y="44.25" xml:space="preserve">greenish grey silty fine SAND</text></g><g transform="matrix(1.1081 0.3082 -0.6160 0.7880 1123 432)" fill="#8cf0b0" stroke="#8cf0b0" stroke-width="0.12" font-family="Liberation Sans" font-size="7.2"><text x="0.00 6.40 12.01 18.95 24.55 28.80 31.16 37.29 43.70 49.30 54.90 61.30 65.56 71.96 78.10 83.96 89.56 95.16 101.57 107.97 113.57 117.56 123.16 128.76 133.01" y="0.00" xml:space="preserve">Name: BH12H/CPT12HHeight:</text><text x="0.00 5.60 9.85 15.45 21.05" y="8.85" xml:space="preserve">8.00m</text><text x="0.00 6.40 12.01 17.61 21.86 27.46 29.81 35.14 39.40 45.00 49.52 53.77 58.02 60.38 65.98 71.58 77.18 82.78 87.03 92.63 98.23 105.17 109.43 111.78 117.38 122.98 128.58" y="17.70" xml:space="preserve">Depth start: 1816.18m, end:</text><text x="0.00 5.60 11.20 16.80 22.40 26.65 32.25 37.85" y="26.55" xml:space="preserve">1808.18m</text><text x="0.00 6.94 12.54 16.79 22.39 26.91 30.90 36.50 40.48 44.73 47.09 52.42 56.94 63.88 69.48 74.00 78.25 83.58 88.10 95.04 100.64 105.16 109.41 111.77 117.10 122.70 127.22" y="35.40" xml:space="preserve">Material: s(me):s(me): very</text><text x="0.00 5.60 11.20 16.80 22.13 27.73 30.09 35.69 41.29 45.81 51.14 53.49 59.09 63.61 69.21 74.54 76.90 83.84 89.44 95.04 99.02 104.62 111.56 113.92 120.06 126.20 132.60" y="44.25" xml:space="preserve">dense dark grey medium SAND</text><text x="0.00 6.40 10.39 14.64 20.24 22.60 28.20 32.72 38.32 43.65 49.25" y="53.10" xml:space="preserve">with gravel</text></g><g transform="matrix(1.1081 0.3082 -0.6160 0.7880 1120 491)" fill="#ffa03a" stroke="#ffa03a" stroke-width="0.12" font-family="Liberation Sans" font-size="7.2"><text x="0.00 6.40 12.01 18.95 24.55 28.80 31.16 37.29 43.70 49.30 54.90 61.30 65.56 71.96 78.10 83.96 89.56 95.16 101.57 107.97 113.57 117.56 123.16 128.76 133.01" y="0.00" xml:space="preserve">Name: BH12H/CPT12HHeight:</text><text x="0.00 5.60 9.85 15.45 21.05" y="8.85" xml:space="preserve">3.30m</text><text x="0.00 6.40 12.01 17.61 21.86 27.46 29.81 35.14 39.40 45.00 49.52 53.77 58.02 60.38 65.98 71.58 77.18 82.78 87.03 92.63 98.23 105.17 109.43 111.78 117.38 122.98 128.58" y="17.70" xml:space="preserve">Depth start: 1808.18m, end:</text><text x="0.00 5.60 11.20 16.80 22.40 26.65 32.25 37.85" y="26.55" xml:space="preserve">1804.88m</text><text x="0.00 6.94 12.54 16.79 22.39 26.91 30.90 36.50 40.48 44.73 47.09 52.42 56.67 62.00 66.25 68.61 74.21 79.81 84.33 89.66 92.01 97.61 102.13 107.73" y="35.40" xml:space="preserve">Material: c:c: dark gray</text><text x="0.00 5.60 10.12 15.72 21.05 26.65 30.63 34.61 39.94 42.30 47.63 53.23 58.83 64.43 69.76 72.12 78.52 84.12 90.26" y="44.25" xml:space="preserve">gravelly sandy CLAY</text></g><g transform="matrix(1.1081 0.3082 -0.6160 0.7880 1120 540)" fill="#fafa96" stroke="#fafa96" stroke-width="0.12" font-family="Liberation Sans" font-size="7.2"><text x="0.00 6.40 12.01 18.95 24.55 28.80 31.16 37.29 43.70 49.30 54.90 61.30 65.56 71.96 78.10 83.96 89.56 95.16 101.57 107.97 113.57 117.56 123.16 128.76 133.01" y="0.00" xml:space="preserve">Name: BH12H/CPT12HHeight:</text><text x="0.00 5.60 9.85 15.45 21.05" y="8.85" xml:space="preserve">5.90m</text><text x="0.00 6.40 12.01 17.61 21.86 27.46 29.81 35.14 39.40 45.00 49.52 53.77 58.02 60.38 65.98 71.58 77.18 82.78 87.03 92.63 98.23 105.17 109.43 111.78 117.38 122.98 128.58" y="17.70" xml:space="preserve">Depth start: 1804.88m, end:</text><text x="0.00 5.60 11.20 16.80 22.40 26.65 32.25 37.85" y="26.55" xml:space="preserve">1798.98m</text><text x="0.00 6.94 12.54 16.79 22.39 26.91 30.90 36.50 40.48 44.73 47.09 52.42 56.94 61.19 65.71 69.96 75.29 79.81 84.06 88.58 92.83 95.19 100.52 106.12 110.64 115.97 118.33 123.93 129.53 135.13 140.45" y="35.40" xml:space="preserve">Material: s(f):s(f): very dense</text><text x="0.00 5.60 11.20 15.72 21.05 23.41 29.01 33.53 39.13 44.45 46.81 52.14 56.12 60.11 64.36 69.69 72.04 76.30 80.28 85.88 91.48 93.84 99.97 106.11 112.52" y="44.25" xml:space="preserve">dark gray silty fine SAND</text></g><g transform="matrix(1.1081 0.3082 -0.6160 0.7880 1122 689)" fill="#48f0f0" stroke="#48f0f0" stroke-width="0.12" font-family="Liberation Sans" font-size="7.2"><text x="0.00 6.40 12.01 18.95 24.55 28.80 31.16 37.29 43.70 49.30 54.90 61.30 65.56 71.96 78.10 83.96 89.56 95.16 101.57 107.97 113.57 117.56 123.16 128.76 133.01" y="0.00" xml:space="preserve">Name: BH12H/CPT12HHeight:</text><text x="0.00 5.60 11.20 15.45 21.05 26.65" y="8.85" xml:space="preserve">25.20m</text><text x="0.00 6.40 12.01 17.61 21.86 27.46 29.81 35.14 39.40 45.00 49.52 53.77 58.02 60.38 65.98 71.58 77.18 82.78 87.03 92.63 98.23 105.17 109.43 111.78 117.38 122.98 128.58" y="17.70" xml:space="preserve">Depth start: 1798.98m, end:</text><text x="0.00 5.60 11.20 16.80 22.40 26.65 32.25 37.85" y="26.55" xml:space="preserve">1773.78m</text><text x="0.00 6.94 12.54 16.79 22.39 26.91 30.90 36.50 40.48 44.73 47.09 53.49 59.90 66.04 71.64 77.77 82.03 88.43 94.84 100.97 106.57 112.71 116.96 119.32 124.65 130.25 134.77" y="35.40" xml:space="preserve">Material: CHALK:CHALK: very</text><text x="0.00 6.40 12.01 17.61 22.93 25.29 30.62 34.60 38.59 44.19 49.79 54.04 58.02 63.35 65.71 72.11 77.71 83.31 87.56 93.16 98.76 103.28 108.88 114.48 116.84 123.25 128.85 132.83 137.08" y="44.25" xml:space="preserve">weak slightly weathered white</text><text x="0.00 6.40 12.81 18.95 24.55" y="53.10" xml:space="preserve">CHALK</text></g><g transform="matrix(1.0118 0.2814 -0.2198 0.9755 912 343)" fill="#d2a83e" stroke="#d2a83e" stroke-width="0.08" font-family="Liberation Sans" font-size="8.9"><text x="0.00 6.91 12.95 20.43 26.47 31.06 36.57 43.19 50.10 56.14 62.18 69.09 73.67 80.58 87.20 93.52 99.56 105.60" y="0.00" xml:space="preserve">Name: BH12H/CPT12H</text><text x="0.00 6.91 12.95 18.99 23.57 29.61 34.20 39.71 45.75 51.79 56.38 62.42 68.46" y="12.80" xml:space="preserve">Depth: 60.20m</text><text x="0.00 6.62 10.92 16.96 22.70 28.74 33.33 37.62 43.66 49.70 54.29 59.80 65.84 71.88 77.92 83.96 88.55 94.59 100.63" y="25.60" xml:space="preserve">Elevation: 1833.98m</text><text x="0.00 6.91 11.20 17.24 24.73 30.77 35.36 41.40 46.27 50.86 56.37 62.41 66.99 73.03 79.07 86.56" y="38.40" xml:space="preserve">Diameter: 0.00mm</text><text x="0.00 6.62 11.21 18.11 22.70 28.21 33.08 39.12 45.16 51.20 57.24 63.28 69.32 75.36 79.95 85.99 92.03 98.07 104.11 110.15 115.66" y="51.20" xml:space="preserve">E/N: (3180536.51751 ,</text><text x="0.00 6.04 12.08 18.12 24.16 30.20 36.24 42.28 46.87 52.91 58.95 64.99 71.03 77.07" y="64.00" xml:space="preserve">1614406.04708)</text><text x="0.00 6.62 13.24 19.86 27.06" y="76.80" xml:space="preserve">EPSG:</text></g></svg>
<svg class="a" style="left:0px;top:0px;left:0;top:0;" width="1919" height="1029" viewBox="0 0 1919 1029"><defs><radialGradient id="cs" cx="0.5" cy="0.5" r="0.5"><stop offset="0" stop-color="#000" stop-opacity="0.35"/><stop offset="1" stop-color="#000" stop-opacity="0"/></radialGradient></defs><path fill-rule="evenodd" fill="#4b525d" d="M1743,279 A64,39 0 1 0 1871,279 A64,39 0 1 0 1743,279 Z M1758,279.5 A48.5,26 0 1 0 1855,279.5 A48.5,26 0 1 0 1758,279.5 Z"/><ellipse cx="1806" cy="283" rx="40" ry="18" fill="url(#cs)"/><polygon points="1773,236 1795,212 1839,222 1821,246" fill="#b2b2b2"/><polygon points="1773,236 1821,246 1820,289 1776,275" fill="#a6a6a6"/><polygon points="1821,246 1839,222 1838,265 1820,289" fill="#9c9c9c"/><g stroke="#6a6a6a" stroke-width="0.8" stroke-dasharray="2,1.5" fill="none"><polyline points="1773,236 1821,246 1839,222"/><line x1="1821" y1="246" x2="1820" y2="289"/></g><text transform="matrix(0.98 0.2 -0.3 0.9 1797 232)" font-family="Liberation Sans" font-weight="bold" font-style="italic" font-size="9" fill="#555">TOP</text><text transform="matrix(0.97 0.2 0 1 1780 266)" font-family="Liberation Sans" font-weight="bold" font-size="10.5" fill="#555">FRONT</text><text transform="matrix(0.35 -0.9 0.25 0.95 1831 272)" font-family="Liberation Sans" font-weight="bold" font-size="8" fill="#555">RIGHT</text><g font-family="Liberation Sans" font-weight="bold" font-size="18" fill="#a9adb2"><text transform="matrix(1.1 -0.3 0.3 0.62 1749 261)">W</text><text transform="matrix(1.2 0.45 -0.3 0.8 1853 289)">E</text><text transform="matrix(1.35 -0.12 -0.1 0.92 1768 318)">S</text></g></svg>
<div class="a" style="left:1783px;top:337px;width:48px;height:16px;background:#5c6470;border-radius:4px;border:1px solid #6c737e;"></div>
<div class="t" style="left:1788.00px;top:341.05px;font-size:11px;line-height:12.29px;color:#a7adb5;">WCS</div>
<svg class="a" style="left:1819px;top:343px;" width="7" height="4" viewBox="0 0 7 4"><polygon points="0,0 7,0 3.5,4" fill="#8a9098"/></svg>
<svg class="a" style="left:1854px;top:379px;" width="32" height="213" viewBox="0 0 32 213"><rect x="0.5" y="0.5" width="31" height="212" rx="4" fill="#5a606a" stroke="#454a53"/><g fill="none" stroke="#464b53" stroke-width="1.5"><circle cx="16" cy="31" r="11"/><circle cx="16" cy="31" r="6"/><path d="M9,86 C8,76 10,70 12,74 L12,66 C12,62 15,62 15,66 L15,72 L15,62 C15,58 18,58 18,62 L18,72 L18,64 C18,60 21,60 21,64 L21,74 L21,68 C21,64 24,64 24,68 L24,80 C24,88 20,92 15,92 C12,92 10,90 9,86 Z"/><path d="M5,96 L16,107 M5,96 L5,100 M5,96 L9,96 M27,96 L17,106 M27,96 L23,96 M27,96 L27,100 M5,118 L10,113"/><circle cx="21" cy="116" r="4.5"/><line x1="24" y1="119" x2="28" y2="123"/><ellipse cx="16" cy="150" rx="11" ry="5"/><path d="M16,132 L16,160 M12,136 L16,131 L20,136"/><rect x="4" y="174" width="7" height="6"/><rect x="12.5" y="174" width="7" height="6"/><rect x="21" y="174" width="7" height="6"/><rect x="4" y="182" width="24" height="14"/></g><polygon points="13,184 13,194 21,189" fill="#464b53"/><g fill="#464b53"><polygon points="14,52 18,52 16,55"/><polygon points="14,125 18,125 16,128"/><polygon points="14,165 18,165 16,168"/></g><circle cx="26" cy="7" r="3.5" fill="none" stroke="#4a4f57"/><circle cx="26" cy="206" r="3.5" fill="none" stroke="#4a4f57"/></svg>
<svg class="a" style="left:0px;top:0px;left:0;top:0;" width="1919" height="1029" viewBox="0 0 1919 1029"><rect x="487" y="909" width="5.5" height="41" fill="#1a439c"/><polygon points="487,912 492.5,907 492.5,912" fill="#a8c8f0"/><path d="M493,946 L512,922" stroke="#158a15" stroke-width="5" stroke-linecap="round"/><path d="M492,948.5 L535,961" stroke="#c83434" stroke-width="4" stroke-linecap="round"/><path d="M494,948.5 L534,960" stroke="#f4b0b0" stroke-width="1"/><path d="M488,894 L500,894 L488,906.5 L500,906.5" fill="none" stroke="#4a78dc" stroke-width="1"/><path d="M508,905 L514,911 L520,905 M514,911 L514,917" fill="none" stroke="#3cbf3c" stroke-width="0.9"/><path d="M531,944 L543,955 M543,944 L531,955" fill="none" stroke="#e04848" stroke-width="0.9"/></svg>
<div class="a" style="left:662px;top:970px;width:1004px;height:28px;background:#2b313c;border-radius:2px;"></div>
<div class="a" style="left:720px;top:971px;width:946px;height:27px;background:#c4c4c4;border-radius:3px 0 0 3px;"></div>
<svg class="a" style="left:666px;top:976px;" width="6" height="18" viewBox="0 0 6 18"><rect x="0" y="0" width="2" height="2" fill="#d0d0d0"/><rect x="0" y="3.5" width="2" height="2" fill="#d0d0d0"/><rect x="0" y="7" width="2" height="2" fill="#d0d0d0"/><rect x="0" y="10.5" width="2" height="2" fill="#d0d0d0"/><rect x="0" y="14" width="2" height="2" fill="#d0d0d0"/><rect x="3.5" y="0" width="2" height="2" fill="#d0d0d0"/><rect x="3.5" y="3.5" width="2" height="2" fill="#d0d0d0"/><rect x="3.5" y="7" width="2" height="2" fill="#d0d0d0"/><rect x="3.5" y="10.5" width="2" height="2" fill="#d0d0d0"/><rect x="3.5" y="14" width="2" height="2" fill="#d0d0d0"/></svg>
<svg class="a" style="left:678px;top:979px;" width="10" height="10" viewBox="0 0 10 10"><path d="M1,1 L9,9 M9,1 L1,9" stroke="#d8d8d8" stroke-width="1.6"/></svg>
<svg class="a" style="left:698px;top:976px;" width="17" height="17" viewBox="0 0 17 17"><path d="M2.5,14.5 L9.5,7.5" stroke="#c8c8c8" stroke-width="2.8" stroke-linecap="round"/><path d="M8.2,8.8 A4.6,4.6 0 0 1 11.5,1.2 L10,4.5 L12.5,7 L15.8,5.5 A4.6,4.6 0 0 1 8.2,8.8 Z" fill="#c8c8c8"/></svg>
<svg class="a" style="left:724px;top:979px;" width="16" height="12" viewBox="0 0 16 12"><rect x="0.5" y="0.5" width="15" height="11" fill="none" stroke="#555" stroke-width="1"/><rect x="0.5" y="0.5" width="15" height="2" fill="#555"/><path d="M2.5,5 L5,6.5 L2.5,8 M6,9 L10,9" fill="none" stroke="#444" stroke-width="0.9"/></svg>
<svg class="a" style="left:742px;top:983px;" width="8" height="5" viewBox="0 0 8 5"><polygon points="0,0 8,0 4,5" fill="#555"/></svg>
<div class="t" style="left:757.00px;top:979.59px;font-size:11.5px;line-height:12.85px;color:#6b6b6b;font-style:italic;font-family:'Liberation Mono',monospace;transform:scaleX(0.9935);transform-origin:0 0;">Type a command</div>
<svg class="a" style="left:1655px;top:984px;" width="7" height="4" viewBox="0 0 7 4"><polygon points="0,4 3.5,0 7,4" fill="#555"/></svg>
<div class="a" style="left:1892px;top:144px;width:25px;height:555px;background:#38404d;border:1px solid #2a303a;"></div>
<div class="a" style="left:1892px;top:700px;width:25px;height:74px;background:#38404d;border:1px solid #2a303a;"></div>
<svg class="a" style="left:1896px;top:146px;" width="24" height="5" viewBox="0 0 24 5"><rect x="0.5" y="0" width="1.3" height="1.3" fill="#c8c8c8"/><rect x="0.5" y="3" width="1.3" height="1.3" fill="#c8c8c8"/><rect x="2.6" y="0" width="1.3" height="1.3" fill="#c8c8c8"/><rect x="2.6" y="3" width="1.3" height="1.3" fill="#c8c8c8"/><rect x="4.7" y="0" width="1.3" height="1.3" fill="#c8c8c8"/><rect x="4.7" y="3" width="1.3" height="1.3" fill="#c8c8c8"/><rect x="6.800000000000001" y="0" width="1.3" height="1.3" fill="#c8c8c8"/><rect x="6.800000000000001" y="3" width="1.3" height="1.3" fill="#c8c8c8"/><rect x="8.9" y="0" width="1.3" height="1.3" fill="#c8c8c8"/><rect x="8.9" y="3" width="1.3" height="1.3" fill="#c8c8c8"/><rect x="11.0" y="0" width="1.3" height="1.3" fill="#c8c8c8"/><rect x="11.0" y="3" width="1.3" height="1.3" fill="#c8c8c8"/><rect x="13.100000000000001" y="0" width="1.3" height="1.3" fill="#c8c8c8"/><rect x="13.100000000000001" y="3" width="1.3" height="1.3" fill="#c8c8c8"/></svg>
<svg class="a" style="left:1896px;top:703px;" width="24" height="5" viewBox="0 0 24 5"><rect x="0.5" y="0" width="1.3" height="1.3" fill="#c8c8c8"/><rect x="0.5" y="3" width="1.3" height="1.3" fill="#c8c8c8"/><rect x="2.6" y="0" width="1.3" height="1.3" fill="#c8c8c8"/><rect x="2.6" y="3" width="1.3" height="1.3" fill="#c8c8c8"/><rect x="4.7" y="0" width="1.3" height="1.3" fill="#c8c8c8"/><rect x="4.7" y="3" width="1.3" height="1.3" fill="#c8c8c8"/><rect x="6.800000000000001" y="0" width="1.3" height="1.3" fill="#c8c8c8"/><rect x="6.800000000000001" y="3" width="1.3" height="1.3" fill="#c8c8c8"/><rect x="8.9" y="0" width="1.3" height="1.3" fill="#c8c8c8"/><rect x="8.9" y="3" width="1.3" height="1.3" fill="#c8c8c8"/><rect x="11.0" y="0" width="1.3" height="1.3" fill="#c8c8c8"/><rect x="11.0" y="3" width="1.3" height="1.3" fill="#c8c8c8"/><rect x="13.100000000000001" y="0" width="1.3" height="1.3" fill="#c8c8c8"/><rect x="13.100000000000001" y="3" width="1.3" height="1.3" fill="#c8c8c8"/></svg>
<svg class="a" style="left:1895px;top:153px;" width="18" height="18" viewBox="0 0 18 18"><path d="M2,17 L2,2 L17,2" fill="none" stroke="#dcdcdc" stroke-width="1.6"/><path d="M4,15 L4,5 A10,10 0 0 1 14,5 Z" fill="#c8d8e8"/><path d="M6,12 A8,8 0 0 0 14,4" fill="none" stroke="#5aaee8" stroke-width="1.4"/></svg>
<svg class="a" style="left:1895px;top:177px;" width="18" height="18" viewBox="0 0 18 18"><path d="M2,1 L2,17 L17,17" fill="none" stroke="#dcdcdc" stroke-width="1.5" stroke-dasharray="2,1.5"/><path d="M3,16 L15,4" stroke="#dcdcdc" stroke-width="1.3"/><path d="M4,4 A10,10 0 0 1 11,8 L4,15 Z" fill="#c8d8e8"/></svg>
<svg class="a" style="left:1895px;top:199px;" width="18" height="18" viewBox="0 0 18 18"><path d="M5,1 L5,17" stroke="#dcdcdc" stroke-width="1.5" stroke-dasharray="2,1.5"/><path d="M7,4 A9,9 0 0 1 11,14 L7,8 Z" fill="#c8d8e8" stroke="#5aaee8"/></svg>
<svg class="a" style="left:1895px;top:221px;" width="18" height="18" viewBox="0 0 18 18"><path d="M5,3 L5,17" stroke="#dcdcdc" stroke-width="1.5" stroke-dasharray="2,1.5"/><path d="M7,4 L14,8 L7,13 Z" fill="#c8d8e8"/></svg>
<svg class="a" style="left:1895px;top:243px;" width="18" height="18" viewBox="0 0 18 18"><rect x="2" y="1" width="10" height="14" fill="#dcdcdc"/><path d="M8,1 L8,15 M2,8 L14,8" stroke="#777" stroke-width="1"/><rect x="9" y="9" width="8" height="8" fill="#eee" stroke="#333" stroke-width="0.8"/><path d="M13,9 L13,17 M9,13 L17,13" stroke="#333" stroke-width="0.8"/></svg>
<svg class="a" style="left:1895px;top:265px;" width="18" height="18" viewBox="0 0 18 18"><circle cx="8" cy="8" r="7" fill="#5aaee8"/><path d="M3,6 C6,4 8,9 11,7" stroke="#e8f4fc" stroke-width="1.5" fill="none"/><rect x="9" y="9" width="8" height="8" fill="#eee" stroke="#333" stroke-width="0.8"/><path d="M13,9 L13,17 M9,13 L17,13" stroke="#333" stroke-width="0.8"/></svg>
<svg class="a" style="left:1895px;top:287px;" width="18" height="18" viewBox="0 0 18 18"><circle cx="9" cy="9" r="7.5" fill="#5aaee8"/><path d="M2,9 L16,9 M9,2 L9,16" stroke="#dff0fb" stroke-width="1.2"/><circle cx="6" cy="12" r="2" fill="#fff" stroke="#234"/><circle cx="12" cy="6" r="2" fill="#fff" stroke="#234"/></svg>
<svg class="a" style="left:1895px;top:309px;" width="18" height="18" viewBox="0 0 18 18"><circle cx="6" cy="6" r="3" fill="none" stroke="#dcdcdc" stroke-width="1.3"/><path d="M6,0 L6,2.5 M6,9.5 L6,12 M0,6 L2.5,6 M9.5,6 L12,6" stroke="#dcdcdc" stroke-width="1.3"/><path d="M12,12 L12,17 M15,12 L15,17 M10.5,13.5 L16.5,13.5 M10.5,15.5 L16.5,15.5" stroke="#5aaee8" stroke-width="1"/></svg>
<svg class="a" style="left:1895px;top:331px;" width="18" height="18" viewBox="0 0 18 18"><circle cx="6" cy="6" r="3" fill="none" stroke="#dcdcdc" stroke-width="1.3"/><path d="M6,0 L6,2.5 M6,9.5 L6,12 M0,6 L2.5,6 M9.5,6 L12,6" stroke="#dcdcdc" stroke-width="1.3"/><path d="M10,17 L13,10 L16,17 M11,15 L15,15" fill="none" stroke="#dcdcdc" stroke-width="1.1"/></svg>
<svg class="a" style="left:1895px;top:353px;" width="18" height="18" viewBox="0 0 18 18"><circle cx="6" cy="6" r="3" fill="none" stroke="#dcdcdc" stroke-width="1.3"/><path d="M6,0 L6,2.5 M6,9.5 L6,12 M0,6 L2.5,6 M9.5,6 L12,6" stroke="#dcdcdc" stroke-width="1.3"/><polygon points="9,8 16,14 13,14 15,18 13.5,18.5 11.5,15 9,17" fill="#dcdcdc"/></svg>
<svg class="a" style="left:1895px;top:375px;" width="18" height="18" viewBox="0 0 18 18"><circle cx="6" cy="6" r="3" fill="none" stroke="#dcdcdc" stroke-width="1.3"/><path d="M6,0 L6,2.5 M6,9.5 L6,12 M0,6 L2.5,6 M9.5,6 L12,6" stroke="#dcdcdc" stroke-width="1.3"/><circle cx="12.5" cy="12.5" r="3" fill="none" stroke="#dcdcdc" stroke-width="1.2"/><path d="M14.5,14.5 L17,17" stroke="#dcdcdc" stroke-width="1.5"/></svg>
<svg class="a" style="left:1895px;top:397px;" width="18" height="18" viewBox="0 0 18 18"><path d="M3,2 L3,16 L16,16" stroke="#dcdcdc" stroke-width="1.3" stroke-dasharray="2,1.5" fill="none"/><rect x="6" y="3" width="9" height="9" fill="none" stroke="#dcdcdc" stroke-width="1.1"/><path d="M6,12 L15,3" stroke="#dcdcdc"/><rect x="6" y="3" width="9" height="9" fill="#5aaee8" opacity="0.3"/></svg>
<svg class="a" style="left:1895px;top:417px;" width="18" height="18" viewBox="0 0 18 18"><path d="M5,2 L5,17" stroke="#5aaee8" stroke-width="1.5"/><path d="M1,4 L16,4" stroke="#5aaee8" stroke-width="1.2" stroke-dasharray="2,1.5"/><circle cx="5" cy="4" r="2" fill="#5aaee8"/><path d="M9,7 A6,6 0 0 1 10,16" fill="none" stroke="#dcdcdc" stroke-width="1.2" stroke-dasharray="2,1.5"/></svg>
<svg class="a" style="left:1895px;top:447px;" width="18" height="18" viewBox="0 0 18 18"><polygon points="1,9 9,9 6,13 6,17 4,17 4,13" fill="#dcdcdc"/><circle cx="7" cy="5" r="3" fill="none" stroke="#dcdcdc"/><polygon points="9,6 17,13 13,13 15,17 13,18 11,14 9,16" fill="#dcdcdc"/></svg>
<svg class="a" style="left:1895px;top:475px;" width="18" height="18" viewBox="0 0 18 18"><path d="M1,6 L16,6" stroke="#5aaee8" stroke-width="1.2" stroke-dasharray="2,1.5"/><path d="M7,1 L7,10" stroke="#5aaee8" stroke-width="1.5"/><circle cx="7" cy="6" r="2" fill="#5aaee8"/><path d="M10,9 A5,5 0 0 1 10,17 M2,14 L9,14" fill="none" stroke="#dcdcdc" stroke-width="1.2" stroke-dasharray="2,1.5"/></svg>
<svg class="a" style="left:1895px;top:497px;" width="18" height="18" viewBox="0 0 18 18"><polygon points="1,4 6,1 11,4 10,10 2,10" fill="#dcdcdc"/><path d="M8,10 L16,10 A4,4 0 0 1 16,17 L8,17" fill="none" stroke="#5aaee8" stroke-width="1.2" stroke-dasharray="2,1.5"/></svg>
<svg class="a" style="left:1895px;top:518px;" width="18" height="18" viewBox="0 0 18 18"><circle cx="6" cy="6" r="3" fill="none" stroke="#dcdcdc" stroke-width="1.3"/><path d="M6,0 L6,2.5 M6,9.5 L6,12 M0,6 L2.5,6 M9.5,6 L12,6" stroke="#dcdcdc" stroke-width="1.3"/><path d="M8,10 L16,10 A4,4 0 0 1 16,17 L8,17" fill="none" stroke="#5aaee8" stroke-width="1.2" stroke-dasharray="2,1.5"/></svg>
<svg class="a" style="left:1895px;top:548px;" width="18" height="18" viewBox="0 0 18 18"><path d="M3,2 L3,16 L16,16" stroke="#dcdcdc" stroke-width="1.3" stroke-dasharray="2,1.5" fill="none"/><circle cx="12" cy="10" r="1.6" fill="#5aaee8"/><path d="M12,10 L12,16" stroke="#5aaee8"/></svg>
<svg class="a" style="left:1895px;top:569px;" width="18" height="18" viewBox="0 0 18 18"><path d="M3,16 L15,4" stroke="#dcdcdc" stroke-width="1.3"/><path d="M15,4 L11,4 M15,4 L15,8" stroke="#dcdcdc" stroke-width="1.3"/><path d="M15,8 L15,17 L6,17" stroke="#dcdcdc" stroke-width="1.2" stroke-dasharray="2,1.5" fill="none"/><path d="M12,12 L12,16" stroke="#5aaee8" stroke-width="1.4"/></svg>
<svg class="a" style="left:1895px;top:591px;" width="18" height="18" viewBox="0 0 18 18"><path d="M2,1 L2,17 L17,17" stroke="#dcdcdc" stroke-width="1.3" stroke-dasharray="2,1.5" fill="none"/><path d="M3,15 L10,8 L13,13 L16,10" stroke="#dcdcdc" stroke-width="1.2" fill="none"/><path d="M11,15 L16,15" stroke="#5aaee8" stroke-width="1.2"/></svg>
<svg class="a" style="left:1895px;top:612px;" width="18" height="18" viewBox="0 0 18 18"><path d="M2,14 L10,4" stroke="#dcdcdc" stroke-width="1.3"/><path d="M10,4 L6,4 M10,4 L10,8" stroke="#dcdcdc" stroke-width="1.1"/><path d="M7,16 L17,16 M7,16 L9,14 M17,16 L15,14" stroke="#dcdcdc" stroke-width="1.2"/><circle cx="3" cy="15" r="1.3" fill="#5aaee8"/></svg>
<svg class="a" style="left:1895px;top:635px;" width="18" height="18" viewBox="0 0 18 18"><circle cx="8" cy="8" r="7" fill="none" stroke="#dcdcdc" stroke-width="1.4"/><path d="M4,4 L9,9" stroke="#dcdcdc" stroke-width="1.4"/><rect x="10" y="9" width="7" height="9" fill="#e8c060" transform="rotate(35 13 13)"/></svg>
<svg class="a" style="left:1895px;top:657px;" width="18" height="18" viewBox="0 0 18 18"><path d="M2,13 L13,2 M2,10 L5,16 M10,1 L16,6" stroke="#dcdcdc" stroke-width="1.2"/><rect x="10" y="9" width="7" height="9" fill="#e8c060" transform="rotate(35 13 13)"/></svg>
<svg class="a" style="left:1895px;top:679px;" width="18" height="18" viewBox="0 0 18 18"><path d="M2,16 A14,14 0 0 1 15,2" stroke="#dcdcdc" stroke-width="1.5" stroke-dasharray="2,2" fill="none"/><rect x="9" y="8" width="8" height="10" fill="#e8f0f8"/><rect x="10" y="9" width="6" height="2.5" fill="#5aaee8"/><g fill="#5aaee8"><rect x="10" y="12.5" width="1.5" height="1.5"/><rect x="12.5" y="12.5" width="1.5" height="1.5"/><rect x="10" y="15" width="1.5" height="1.5"/><rect x="12.5" y="15" width="1.5" height="1.5"/></g></svg>
<svg class="a" style="left:1895px;top:713px;" width="18" height="18" viewBox="0 0 18 18"><polygon points="1,9 9,9 6,13 6,17 4,17 4,13" fill="#dcdcdc"/><circle cx="8" cy="5" r="3" fill="none" stroke="#dcdcdc"/><polygon points="9,6 17,13 13,13 15,17 13,18 11,14 9,16" fill="#dcdcdc"/></svg>
<svg class="a" style="left:1895px;top:735px;" width="18" height="18" viewBox="0 0 18 18"><rect x="3" y="1" width="6" height="8" fill="#dcdcdc"/><polygon points="10,1 15,6 10,6" fill="#dcdcdc"/><polygon points="1,9 9,9 6,13 6,17 4,17 4,13" fill="#dcdcdc"/><rect x="10" y="9" width="7" height="8" fill="none" stroke="#dcdcdc" stroke-width="1.2"/><path d="M13.5,9 L13.5,17 M10,13 L17,13" stroke="#dcdcdc"/></svg>
<svg class="a" style="left:1895px;top:756px;" width="18" height="18" viewBox="0 0 18 18"><circle cx="9" cy="6" r="3" fill="none" stroke="#dcdcdc" stroke-width="1.3"/><path d="M9,0 L9,2.5 M9,9.5 L9,12 M3,6 L5.5,6 M12.5,6 L15,6" stroke="#dcdcdc" stroke-width="1.3"/><polygon points="1,9 9,9 6,13 6,17 4,17 4,13" fill="#dcdcdc"/><path d="M12,12 L12,17 M15,12 L15,17 M10.5,13.5 L16.5,13.5 M10.5,15.5 L16.5,15.5" stroke="#5aaee8" stroke-width="1"/></svg>
<div class="a" style="left:1896px;top:441px;width:18px;height:2px;background:#d8d8d8;"></div>
<div class="a" style="left:1896px;top:469px;width:18px;height:2px;background:#d8d8d8;"></div>
<div class="a" style="left:1896px;top:541px;width:18px;height:2px;background:#d8d8d8;"></div>
<div class="a" style="left:0px;top:1003px;width:1919px;height:26px;background:#222933;"></div>
<svg class="a" style="left:15px;top:1008px;" width="17" height="14" viewBox="0 0 17 14"><rect x="0" y="0.5" width="17" height="2.2" fill="#ececec"/><rect x="0" y="5.5" width="17" height="2.2" fill="#ececec"/><rect x="0" y="10.5" width="17" height="2.2" fill="#ececec"/></svg>
<svg class="a" style="left:41px;top:1003px;" width="69" height="24" viewBox="0 0 69 24"><polygon points="9,0 69,0 60,24 0,24" fill="#3b4453"/></svg>
<div class="t" style="left:58.60px;top:1009.69px;font-size:12.5px;line-height:13.96px;color:#f4f4f4;font-weight:bold;transform:scaleX(0.9638);transform-origin:0 0;">Model</div>
<div class="t" style="left:117.00px;top:1009.69px;font-size:12.5px;line-height:13.96px;color:#e8e8e8;transform:scaleX(0.9218);transform-origin:0 0;">Layout1</div>
<div class="t" style="left:183.00px;top:1009.69px;font-size:12.5px;line-height:13.96px;color:#e8e8e8;transform:scaleX(0.9375);transform-origin:0 0;">Layout2</div>
<svg class="a" style="left:167px;top:1007px;" width="7" height="16" viewBox="0 0 7 16"><line x1="6" y1="0" x2="1" y2="16" stroke="#4f5764" stroke-width="1"/></svg>
<svg class="a" style="left:233px;top:1007px;" width="7" height="16" viewBox="0 0 7 16"><line x1="6" y1="0" x2="1" y2="16" stroke="#4f5764" stroke-width="1"/></svg>
<svg class="a" style="left:275px;top:1007px;" width="7" height="16" viewBox="0 0 7 16"><line x1="6" y1="0" x2="1" y2="16" stroke="#4f5764" stroke-width="1"/></svg>
<svg class="a" style="left:251px;top:1008px;" width="15" height="15" viewBox="0 0 15 15"><rect x="6.5" y="0" width="2" height="15" fill="#efefef"/><rect x="0" y="6.5" width="15" height="2" fill="#efefef"/></svg>
<div class="a" style="left:1218px;top:1005px;width:47px;height:24px;background:#2c3441;"></div>
<div class="a" style="left:1268px;top:1005px;width:64px;height:24px;background:#2c3441;"></div>
<div class="a" style="left:1335px;top:1005px;width:169px;height:24px;background:#2c3441;"></div>
<div class="a" style="left:1507px;top:1005px;width:127px;height:24px;background:#2c3441;"></div>
<div class="a" style="left:1637px;top:1005px;width:40px;height:24px;background:#2c3441;"></div>
<div class="a" style="left:1678px;top:1005px;width:24px;height:24px;background:#2c3441;"></div>
<div class="a" style="left:1706px;top:1005px;width:67px;height:24px;background:#2c3441;"></div>
<div class="a" style="left:1776px;top:1005px;width:89px;height:24px;background:#2c3441;"></div>
<div class="a" style="left:1868px;top:1005px;width:24px;height:24px;background:#2c3441;"></div>
<div class="a" style="left:1894px;top:1005px;width:25px;height:24px;background:#2c3441;"></div>
<div class="a" style="left:1360px;top:1006px;width:22px;height:23px;background:#5585c0;"></div>
<div class="a" style="left:1441px;top:1006px;width:21px;height:23px;background:#5585c0;"></div>
<div class="a" style="left:1465px;top:1006px;width:22px;height:23px;background:#5585c0;"></div>
<div class="a" style="left:1507px;top:1006px;width:22px;height:23px;background:#5585c0;"></div>
<div class="a" style="left:1816px;top:1006px;width:24px;height:23px;background:#5585c0;"></div>
<div class="t" style="left:1221.00px;top:1011.14px;font-size:12px;line-height:13.40px;color:#f0f0f0;transform:scaleX(0.9608);transform-origin:0 0;">MODEL</div>
<svg class="a" style="left:1271px;top:1008px;" width="17" height="17" viewBox="0 0 17 17"><path d="M5,1 L5,16 M10,1 L10,16 M1,5 L16,5 M1,10 L16,10" stroke="#e6e6e6" stroke-width="1.4"/></svg>
<svg class="a" style="left:1297px;top:1009px;" width="16" height="16" viewBox="0 0 16 16"><rect x="1" y="1" width="2" height="2" fill="#e6e6e6"/><rect x="1" y="6" width="2" height="2" fill="#e6e6e6"/><rect x="1" y="11" width="2" height="2" fill="#e6e6e6"/><rect x="6" y="1" width="2" height="2" fill="#e6e6e6"/><rect x="6" y="6" width="2" height="2" fill="#e6e6e6"/><rect x="6" y="11" width="2" height="2" fill="#e6e6e6"/><rect x="11" y="1" width="2" height="2" fill="#e6e6e6"/><rect x="11" y="6" width="2" height="2" fill="#e6e6e6"/><rect x="11" y="11" width="2" height="2" fill="#e6e6e6"/></svg>
<svg class="a" style="left:1320px;top:1015px;" width="8" height="5" viewBox="0 0 8 5"><polygon points="0,0 8,0 4,5" fill="#d8d8d8"/></svg>
<svg class="a" style="left:1338px;top:1008px;" width="18" height="17" viewBox="0 0 18 17"><path d="M1.5,0 L1.5,16 L17,16" fill="none" stroke="#e6e6e6" stroke-width="1.2"/><path d="M1.5,11 L6,11 L6,16" fill="none" stroke="#e6e6e6" stroke-width="1"/></svg>
<svg class="a" style="left:1362px;top:1008px;" width="18" height="17" viewBox="0 0 18 17"><circle cx="8" cy="10" r="6" fill="none" stroke="#fff" stroke-width="1.3"/><path d="M8,10 L16,2 M4,10 L14,10" stroke="#fff" stroke-width="1.3"/></svg>
<svg class="a" style="left:1387px;top:1015px;" width="8" height="5" viewBox="0 0 8 5"><polygon points="0,0 8,0 4,5" fill="#d8d8d8"/></svg>
<svg class="a" style="left:1402px;top:1007px;" width="17" height="18" viewBox="0 0 17 18"><path d="M2,2 L16,16" stroke="#d84a4a" stroke-width="1.2"/><path d="M9,1 L9,17" stroke="#48c048" stroke-width="1.2"/><circle cx="9" cy="9" r="1.5" fill="#fff"/></svg>
<svg class="a" style="left:1428px;top:1015px;" width="8" height="5" viewBox="0 0 8 5"><polygon points="0,0 8,0 4,5" fill="#d8d8d8"/></svg>
<svg class="a" style="left:1443px;top:1008px;" width="18" height="17" viewBox="0 0 18 17"><path d="M2,15 L16,15 M2,15 L13,5" stroke="#fff" stroke-width="1.3"/><circle cx="8.5" cy="10" r="1.5" fill="#fff"/></svg>
<svg class="a" style="left:1467px;top:1007px;" width="18" height="18" viewBox="0 0 18 18"><rect x="4" y="4" width="13" height="13" fill="none" stroke="#fff" stroke-width="1.3"/><rect x="1" y="1" width="5" height="5" fill="#5585c0" stroke="#fff" stroke-width="1.1"/></svg>
<svg class="a" style="left:1492px;top:1015px;" width="8" height="5" viewBox="0 0 8 5"><polygon points="0,0 8,0 4,5" fill="#d8d8d8"/></svg>
<svg class="a" style="left:1509px;top:1007px;" width="19" height="19" viewBox="0 0 19 19"><path d="M9,2 L5,10 L1,17 L6,14 L9,17 L12,14 L17,17 L13,10 Z" fill="#fff"/><circle cx="15" cy="4" r="3" fill="none" stroke="#fff" stroke-width="1.2"/></svg>
<svg class="a" style="left:1533px;top:1007px;" width="19" height="19" viewBox="0 0 19 19"><path d="M9,2 L5,10 L1,17 L6,14 L9,17 L12,14 L17,17 L13,10 Z" fill="#d8d8d8"/><path d="M14,1 L12,5 L16,5 L14,9" fill="none" stroke="#d8d8d8" stroke-width="1.2"/></svg>
<svg class="a" style="left:1558px;top:1008px;" width="17" height="17" viewBox="0 0 17 17"><path d="M9,2 L5,10 L1,17 L6,14 L9,17 L12,14 L17,17 L13,10 Z" fill="#d8d8d8"/></svg>
<div class="t" style="left:1584.00px;top:1010.69px;font-size:12.5px;line-height:13.96px;color:#ececec;transform:scaleX(0.8789);transform-origin:0 0;">1:1000</div>
<svg class="a" style="left:1625px;top:1015px;" width="8" height="5" viewBox="0 0 8 5"><polygon points="0,0 8,0 4,5" fill="#d8d8d8"/></svg>
<svg class="a" style="left:1641px;top:1008px;" width="16" height="16" viewBox="0 0 16 16"><g fill="#dedede"><circle cx="8" cy="8" r="5.2"/><rect x="6.4" y="0" width="3.2" height="16"/><rect x="0" y="6.4" width="16" height="3.2"/><rect x="6.4" y="0" width="3.2" height="16" transform="rotate(45 8 8)"/><rect x="6.4" y="0" width="3.2" height="16" transform="rotate(-45 8 8)"/></g><circle cx="8" cy="8" r="2.4" fill="#2c3441"/></svg>
<svg class="a" style="left:1666px;top:1015px;" width="8" height="5" viewBox="0 0 8 5"><polygon points="0,0 8,0 4,5" fill="#d8d8d8"/></svg>
<svg class="a" style="left:1683px;top:1009px;" width="16" height="16" viewBox="0 0 16 16"><rect x="7" y="0" width="2" height="16" fill="#ececec"/><rect x="0" y="7" width="16" height="2" fill="#ececec"/></svg>
<svg class="a" style="left:1711px;top:1008px;" width="17" height="18" viewBox="0 0 17 18"><path d="M3,6 A6,4 0 0 1 14,6" fill="none" stroke="#ddd" stroke-dasharray="1.5,1.5"/><polygon points="1,9 8.5,5 16,9 8.5,13" fill="#5cb8ee"/><polygon points="1,11 8.5,15 16,11 16,13 8.5,17 1,13" fill="#dcdcdc"/></svg>
<div class="t" style="left:1735.90px;top:1010.69px;font-size:12.5px;line-height:13.96px;color:#ececec;transform:scaleX(0.9847);transform-origin:0 0;">3.500</div>
<svg class="a" style="left:1779px;top:1007px;" width="18" height="18" viewBox="0 0 18 18"><path d="M1,5 L1,1 L5,1 M13,1 L17,1 L17,5 M17,13 L17,17 L13,17 M5,17 L1,17 L1,13" fill="none" stroke="#dcdcdc" stroke-width="1.3"/><polygon points="6,12 11,5 15,5 15,9 9,15" fill="#5cb0e8"/></svg>
<svg class="a" style="left:1805px;top:1015px;" width="8" height="5" viewBox="0 0 8 5"><polygon points="0,0 8,0 4,5" fill="#d8d8d8"/></svg>
<svg class="a" style="left:1819px;top:1008px;" width="18" height="16" viewBox="0 0 18 16"><polygon points="2,9 9,2 16,2 16,8 9,15" fill="#fff"/><circle cx="13" cy="5" r="1.3" fill="#5585c0"/><path d="M7,9 L10,12 M9,7 L12,10" stroke="#5585c0"/></svg>
<svg class="a" style="left:1844px;top:1007px;" width="19" height="18" viewBox="0 0 19 18"><rect x="1" y="1" width="6" height="6" fill="none" stroke="#dcdcdc" stroke-width="1.1"/><circle cx="14" cy="8" r="3.5" fill="none" stroke="#dcdcdc" stroke-width="1.1"/><path d="M4,17 L7,11 L10,17 Z" fill="none" stroke="#dcdcdc" stroke-width="1.1"/></svg>
<svg class="a" style="left:1872px;top:1009px;" width="17" height="14" viewBox="0 0 17 14"><rect x="0.5" y="0.5" width="16" height="13" fill="none" stroke="#dcdcdc" stroke-width="1.1"/><path d="M4,10 L7,7 M4,10 L4,8 M4,10 L6,10 M13,4 L10,7 M13,4 L11,4 M13,4 L13,6" stroke="#dcdcdc" stroke-width="1.1"/></svg>
<svg class="a" style="left:1898px;top:1008px;" width="17" height="14" viewBox="0 0 17 14"><rect x="0" y="0.5" width="17" height="2.2" fill="#ececec"/><rect x="0" y="5.5" width="17" height="2.2" fill="#ececec"/><rect x="0" y="10.5" width="17" height="2.2" fill="#ececec"/></svg>
</body></html>
